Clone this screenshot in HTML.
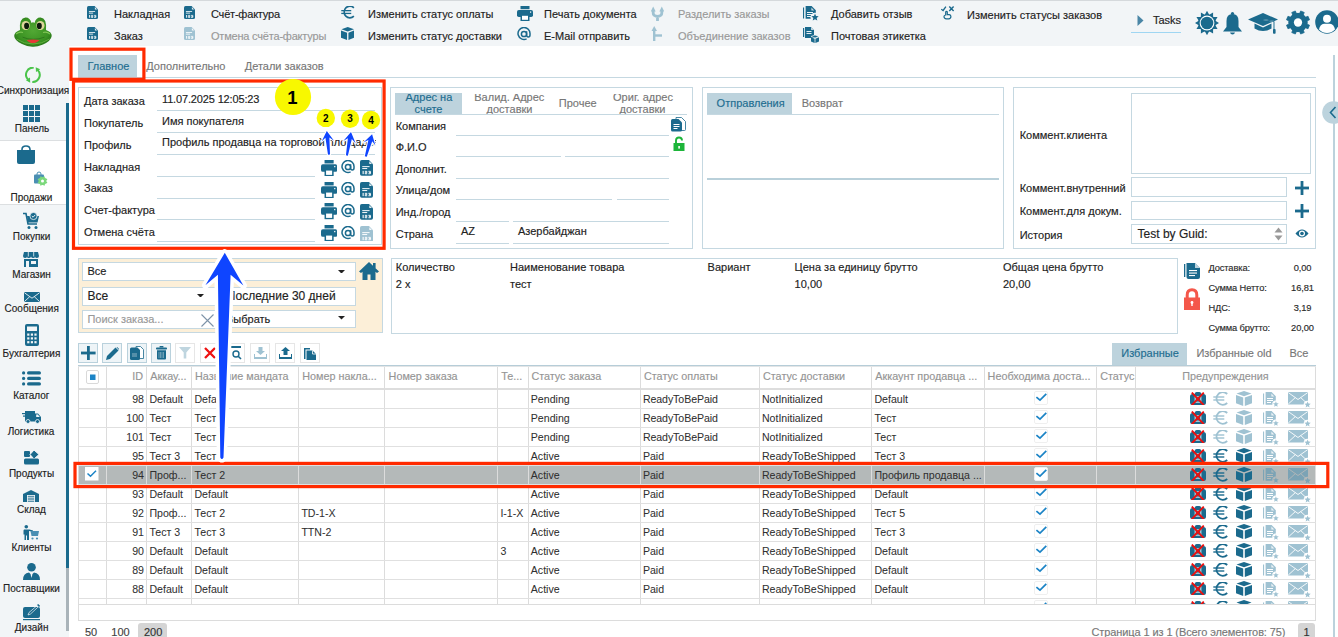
<!DOCTYPE html>
<html><head><meta charset="utf-8"><title>Order</title>
<style>
html,body{margin:0;padding:0;background:#fff;}
#root{position:relative;width:1338px;height:637px;overflow:hidden;background:#fff;font-family:"Liberation Sans", sans-serif;}
.a{position:absolute;display:block;}
.t{position:absolute;white-space:nowrap;line-height:1;font-family:"Liberation Sans", sans-serif;-webkit-text-stroke:0.15px currentColor;}
</style></head><body><div id="root">
<div class="a" style="left:0px;top:0px;width:1338px;height:46px;background:#f2f5f7"></div>
<div class="a" style="left:0px;top:0px;width:1338px;height:1px;background:#d5d9dc"></div>
<div class="a" style="left:0px;top:46px;width:69px;height:591px;background:#f2f5f7"></div>
<div class="a" style="left:0px;top:140px;width:66px;height:65px;background:#fff;border-top:1px solid #dcdfe1;border-bottom:1px solid #dcdfe1;box-sizing:border-box"></div>
<div class="a" style="left:66px;top:103px;width:3px;height:465px;background:#1b6a8d"></div>
<div class="a" style="left:66px;top:568px;width:3px;height:63px;background:#a9b3b9"></div>
<svg class="a" style="left:0;top:0" width="66" height="56" viewBox="0 0 66 56">
<defs><radialGradient id="fg" cx="0.5" cy="0.45" r="0.6"><stop offset="0" stop-color="#52a834"/><stop offset="0.7" stop-color="#3a9222"/><stop offset="1" stop-color="#256f18"/></radialGradient></defs>
<path d="M20 30Q19 18 25.5 17.5Q30 17.3 31.5 23Q33 21.5 34.5 23Q36 17.3 40.5 17.5Q47 18 46 30Q52 32 51.7 36Q51 41 43 44.5Q37 47 33 46.8Q28 47 22 44Q14.5 40.5 14.2 36Q14.2 32 20 30Z" fill="url(#fg)"/>
<path d="M16 34Q19 31.5 23 32.5M50 34Q47 31.5 43 32.5" fill="none" stroke="#8fd060" stroke-width="1.2" opacity=".8"/>
<path d="M16.5 39Q24 44 33 44Q42 44 49.5 39" fill="none" stroke="#7cc850" stroke-width="1" opacity=".6"/>
<ellipse cx="25.7" cy="25.5" rx="4.1" ry="4.6" fill="#ddd59a"/><ellipse cx="40.4" cy="25.5" rx="4.1" ry="4.6" fill="#ddd59a"/>
<ellipse cx="26.6" cy="25.9" rx="2.5" ry="3.1" fill="#0d1a0c"/><ellipse cx="39.3" cy="25.9" rx="2.5" ry="3.1" fill="#0d1a0c"/>
<path d="M22.6 37.2Q33 41.5 44.5 37.2" fill="none" stroke="#2a6e1a" stroke-width=".8"/>
<path d="M26.6 39.9Q33 38.9 39.5 39.9Q37 43 33 43Q29 43 26.6 39.9Z" fill="#e63a36"/>
</svg>
<svg class="a" style="left:87px;top:6px;" width="11" height="13" viewBox="0 0 11 13" preserveAspectRatio="none"><path d="M1.5 0H7.6L11 3.6V11.5Q11 13 9.5 13H1.5Q0 13 0 11.5V1.5Q0 0 1.5 0Z" fill="#1b6a8d"/><path d="M7.9 1.1V3.4H10.1Z" fill="#fff" opacity=".9"/><rect x="1.9" y="5.1" width="6.2" height=".8" fill="#fff"/><rect x="1.9" y="6.7" width="4.2" height=".8" fill="#fff"/><rect x="2.2" y="9" width=".9" height="2.7" fill="#fff"/><path d="M4.1 9.4H5.8V10.5H4.4V11.4H6.1M7.1 9.4H8.8V11.4H7.1M7.5 10.45H8.8" fill="none" stroke="#fff" stroke-width=".8"/></svg>
<div class="t" style="left:114.0px;top:9.39px;font-size:11px;color:#222;font-weight:normal;">Накладная</div>
<svg class="a" style="left:87px;top:27px;" width="11" height="13" viewBox="0 0 11 13" preserveAspectRatio="none"><path d="M1.5 0H7.6L11 3.6V11.5Q11 13 9.5 13H1.5Q0 13 0 11.5V1.5Q0 0 1.5 0Z" fill="#1b6a8d"/><path d="M7.9 1.1V3.4H10.1Z" fill="#fff" opacity=".9"/><rect x="1.9" y="5.1" width="6.2" height=".8" fill="#fff"/><rect x="1.9" y="6.7" width="4.2" height=".8" fill="#fff"/><rect x="2.2" y="9" width=".9" height="2.7" fill="#fff"/><path d="M4.1 9.4H5.8V10.5H4.4V11.4H6.1M7.1 9.4H8.8V11.4H7.1M7.5 10.45H8.8" fill="none" stroke="#fff" stroke-width=".8"/></svg>
<div class="t" style="left:114.0px;top:31.39px;font-size:11px;color:#222;font-weight:normal;">Заказ</div>
<svg class="a" style="left:184px;top:6px;" width="11" height="13" viewBox="0 0 11 13" preserveAspectRatio="none"><path d="M1.5 0H7.6L11 3.6V11.5Q11 13 9.5 13H1.5Q0 13 0 11.5V1.5Q0 0 1.5 0Z" fill="#1b6a8d"/><path d="M7.9 1.1V3.4H10.1Z" fill="#fff" opacity=".9"/><rect x="1.9" y="5.1" width="6.2" height=".8" fill="#fff"/><rect x="1.9" y="6.7" width="4.2" height=".8" fill="#fff"/><rect x="2.2" y="9" width=".9" height="2.7" fill="#fff"/><path d="M4.1 9.4H5.8V10.5H4.4V11.4H6.1M7.1 9.4H8.8V11.4H7.1M7.5 10.45H8.8" fill="none" stroke="#fff" stroke-width=".8"/></svg>
<div class="t" style="left:211.0px;top:9.39px;font-size:11px;color:#222;font-weight:normal;letter-spacing:-0.2px">Счёт-фактура</div>
<svg class="a" style="left:184px;top:27px;" width="11" height="13" viewBox="0 0 11 13" preserveAspectRatio="none"><path d="M1.5 0H7.6L11 3.6V11.5Q11 13 9.5 13H1.5Q0 13 0 11.5V1.5Q0 0 1.5 0Z" fill="#9fc2d2"/><path d="M7.9 1.1V3.4H10.1Z" fill="#fff" opacity=".9"/><rect x="1.9" y="5.1" width="6.2" height=".8" fill="#fff"/><rect x="1.9" y="6.7" width="4.2" height=".8" fill="#fff"/><rect x="2.2" y="9" width=".9" height="2.7" fill="#fff"/><path d="M4.1 9.4H5.8V10.5H4.4V11.4H6.1M7.1 9.4H8.8V11.4H7.1M7.5 10.45H8.8" fill="none" stroke="#fff" stroke-width=".8"/></svg>
<div class="t" style="left:211.0px;top:30.89px;font-size:11px;color:#999;font-weight:normal;letter-spacing:-0.2px">Отмена счёта-фактуры</div>
<svg class="a" style="left:340.5px;top:5.5px;" width="14.5" height="13" viewBox="0 0 16 14" preserveAspectRatio="none"><path d="M14.2 2A6.3 6.3 0 1 0 14.2 11" fill="none" stroke="#1b6a8d" stroke-width="1.8"/><rect x="0.3" y="4.3" width="11" height="1.4" fill="#1b6a8d"/><rect x="0.3" y="7.3" width="11" height="1.4" fill="#1b6a8d"/></svg>
<div class="t" style="left:368.0px;top:9.39px;font-size:11px;color:#222;font-weight:normal;">Изменить статус оплаты</div>
<svg class="a" style="left:340.8px;top:27px;" width="13.5" height="13" viewBox="0 0 16 15" preserveAspectRatio="none"><path d="M8 0L15.5 2.6L8 5.2L0.5 2.6Z" fill="#1b6a8d"/><path d="M0 3.9L7.2 6.6V15L0 12.3Z" fill="#1b6a8d"/><path d="M16 3.9L8.8 6.6V15L16 12.3Z" fill="#1b6a8d"/></svg>
<div class="t" style="left:368.0px;top:30.89px;font-size:11px;color:#222;font-weight:normal;">Изменить статус доставки</div>
<svg class="a" style="left:517px;top:6px;" width="16" height="15" viewBox="0 0 16 15" preserveAspectRatio="none"><rect x="3.5" y="0" width="9" height="3.2" fill="#1b6a8d"/><rect x="0" y="4" width="16" height="7" rx="1.8" fill="#1b6a8d"/><rect x="3.5" y="8.5" width="9" height="6.5" fill="#1b6a8d"/><rect x="5" y="9.8" width="6" height="4" fill="#fff"/><rect x="13" y="5.5" width="1.2" height="1.2" fill="#fff"/></svg>
<div class="t" style="left:544.0px;top:9.39px;font-size:11px;color:#222;font-weight:normal;">Печать документа</div>
<svg class="a" style="left:517px;top:26.5px;" width="14" height="14" viewBox="0 0 14 14" preserveAspectRatio="none"><path d="M9.6 11.9A6 6 0 1 1 13 7V8Q13 10 11.3 10Q9.6 10 9.6 8V4.3" fill="none" stroke="#1b6a8d" stroke-width="1.5"/><circle cx="7" cy="7" r="2.6" fill="none" stroke="#1b6a8d" stroke-width="1.5"/></svg>
<div class="t" style="left:544.0px;top:30.89px;font-size:11px;color:#222;font-weight:normal;">E-Mail отправить</div>
<svg class="a" style="left:651px;top:6px;" width="13" height="15" viewBox="0 0 13 15" preserveAspectRatio="none"><path d="M2.2 4.5V7Q2.2 10 6.5 10.5V15M10.8 4.5V7Q10.8 10 6.5 10.5" fill="none" stroke="#9fc2d2" stroke-width="2.8"/><path d="M-0.3 5.5L2.2 0.5L4.7 5.5Z" fill="#9fc2d2"/><path d="M8.3 5.5L10.8 0.5L13.3 5.5Z" fill="#9fc2d2"/></svg>
<div class="t" style="left:678.0px;top:9.39px;font-size:11px;color:#999;font-weight:normal;">Разделить заказы</div>
<svg class="a" style="left:651px;top:26px;" width="11" height="15" viewBox="0 0 11 15" preserveAspectRatio="none"><path d="M3.2 4V15" stroke="#9fc2d2" stroke-width="2.4"/><path d="M3 9.5H11" stroke="#9fc2d2" stroke-width="2.4"/><path d="M0.5 5L3.2 0L6 5Z" fill="#9fc2d2"/></svg>
<div class="t" style="left:678.0px;top:30.89px;font-size:11px;color:#999;font-weight:normal;">Объединение заказов</div>
<svg class="a" style="left:803px;top:6px;" width="16" height="15" viewBox="0 0 16 15" preserveAspectRatio="none"><rect x="0" y="1.5" width="1.1" height="11" fill="#1b6a8d"/><path d="M2.6 0H8.6L12.8 4.2V10.5Q12.8 12.8 10.5 12.8H2.6Z" fill="#1b6a8d"/><path d="M8.4 1.6V4.4H11.2Z" fill="#f2f5f7" opacity=".8"/><rect x="4" y="6" width="6" height="1" fill="#f2f5f7"/><rect x="4" y="8" width="6" height="1" fill="#f2f5f7"/><rect x="4" y="10" width="4" height="1" fill="#f2f5f7"/><circle cx="12.00" cy="11.20" r="4.50" fill="#f2f5f7"/><polygon points="12.00,7.50 13.03,9.98 15.71,10.19 13.67,11.94 14.29,14.56 12.00,13.16 9.71,14.56 10.33,11.94 8.29,10.19 10.97,9.98" fill="#1b6a8d"/></svg>
<div class="t" style="left:831.0px;top:9.39px;font-size:11px;color:#222;font-weight:normal;">Добавить отзыв</div>
<svg class="a" style="left:803px;top:26.5px;" width="16" height="16" viewBox="0 0 16 16" preserveAspectRatio="none"><rect x="0" y="1" width="1.2" height="9" fill="#1b6a8d"/><path d="M2 0H8L11 3V11H2Z" fill="#1b6a8d"/><path d="M8 0V3H11Z" fill="#fff" opacity=".7"/><rect x="3.5" y="4" width="5" height=".9" fill="#fff"/><rect x="3.5" y="6" width="5" height=".9" fill="#fff"/><path d="M12 8L16 9.5L12 11L8 9.5Z" fill="#1b6a8d" stroke="#fff" stroke-width=".6"/><path d="M8 10.3L11.6 11.7V16L8 14.6Z" fill="#1b6a8d"/><path d="M16 10.3L12.4 11.7V16L16 14.6Z" fill="#1b6a8d"/></svg>
<div class="t" style="left:831.0px;top:30.89px;font-size:11px;color:#222;font-weight:normal;">Почтовая этикетка</div>
<svg class="a" style="left:941px;top:6px;" width="14" height="13.5" viewBox="0 0 14 13.5" preserveAspectRatio="none"><path d="M0.2 3.2L2.1 4.5L4.9 0.6" fill="none" stroke="#1b6a8d" stroke-width="1.3"/><path d="M8.3 0.5L12.6 5.1M12.6 0.5L8.3 5.1" stroke="#1b6a8d" stroke-width="1.4"/><path d="M4.7 9V6.2Q4.7 5.4 5.5 5.4Q6.3 5.4 6.3 6.2V8.6H8.3Q9.9 8.9 9.9 10.6Q9.9 12.8 7.7 12.8H5.4Q3 12.8 3 10.6Q3 9.3 4.7 9Z" fill="none" stroke="#1b6a8d" stroke-width="1.2"/></svg>
<div class="t" style="left:967.0px;top:10.39px;font-size:11px;color:#222;font-weight:normal;">Изменить статусы заказов</div>
<svg class="a" style="left:1137px;top:15px;" width="7" height="11" viewBox="0 0 7 11" preserveAspectRatio="none"><path d="M0.5 0L6.5 5.5L0.5 11Z" fill="#4a86a6"/></svg>
<div class="t" style="left:1153.0px;top:15.39px;font-size:11px;color:#222;font-weight:normal;">Tasks</div>
<div class="a" style="left:1131px;top:32px;width:50px;height:1px;background:#9fd6f2"></div>
<svg class="a" style="left:1194.5px;top:10.5px;" width="24" height="24" viewBox="0 0 24 24" preserveAspectRatio="none"><polygon points="12.00,-0.20 14.23,3.69 18.10,1.43 18.08,5.92 22.57,5.90 20.31,9.77 24.20,12.00 20.31,14.23 22.57,18.10 18.08,18.08 18.10,22.57 14.23,20.31 12.00,24.20 9.77,20.31 5.90,22.57 5.92,18.08 1.43,18.10 3.69,14.23 -0.20,12.00 3.69,9.77 1.43,5.90 5.92,5.92 5.90,1.43 9.77,3.69" fill="#1b6a8d"/><circle cx="12" cy="12" r="8.8" fill="#1b6a8d"/><circle cx="12" cy="12" r="7.4" fill="#fff"/><circle cx="12" cy="12" r="6.3" fill="#1b6a8d"/></svg>
<svg class="a" style="left:1222.5px;top:11.5px;" width="19" height="23" viewBox="0 0 19 23" preserveAspectRatio="none"><circle cx="9.5" cy="1.6" r="1.6" fill="#1b6a8d"/><path d="M9.5 2Q15.5 2 15.5 9V15L19 19.5H0L3.5 15V9Q3.5 2 9.5 2Z" fill="#1b6a8d"/><path d="M7 20.5H12Q11.5 22.5 9.5 22.5Q7.5 22.5 7 20.5Z" fill="#1b6a8d"/></svg>
<svg class="a" style="left:1248px;top:12.5px;" width="30" height="21" viewBox="0 0 30 21" preserveAspectRatio="none"><path d="M15 0L30 6.5L15 13L0 6.5Z" fill="#1b6a8d"/><path d="M6.5 10.5V15.5Q15 20.5 23.5 15.5V10.5L15 14.5Z" fill="#1b6a8d"/><path d="M15 6.5L26.5 8.5V17" fill="none" stroke="#fff" stroke-width="0.9"/><path d="M15 6.5L26 8.3V17" fill="none" stroke="#1b6a8d" stroke-width="1"/><rect x="25" y="16" width="2.6" height="4.8" rx="0.8" fill="#1b6a8d"/></svg>
<svg class="a" style="left:1286px;top:9.5px;" width="24" height="25" viewBox="-0.5 -0.5 25 26" preserveAspectRatio="none"><path d="M21.50,12.50 L21.36,14.13 L23.98,15.28 L22.44,19.01 L19.77,17.96 L18.72,19.22 L17.46,20.27 L18.51,22.94 L14.78,24.48 L13.63,21.86 L12.00,22.00 L10.37,21.86 L9.22,24.48 L5.49,22.94 L6.54,20.27 L5.28,19.22 L4.23,17.96 L1.56,19.01 L0.02,15.28 L2.64,14.13 L2.50,12.50 L2.64,10.87 L0.02,9.72 L1.56,5.99 L4.23,7.04 L5.28,5.78 L6.54,4.73 L5.49,2.06 L9.22,0.52 L10.37,3.14 L12.00,3.00 L13.63,3.14 L14.78,0.52 L18.51,2.06 L17.46,4.73 L18.72,5.78 L19.77,7.04 L22.44,5.99 L23.98,9.72 L21.36,10.87Z" fill="#1b6a8d" stroke="#1b6a8d" stroke-width="0.8" stroke-linejoin="round"/><circle cx="12" cy="12.5" r="9.8" fill="#1b6a8d"/><circle cx="12" cy="12.5" r="4.3" fill="#fff"/></svg>
<svg class="a" style="left:1315px;top:10px;" width="24" height="24" viewBox="0 0 24 24" preserveAspectRatio="none"><circle cx="12" cy="12" r="11.8" fill="#1b6a8d"/><circle cx="12" cy="8.8" r="4" fill="#fff"/><path d="M4 19.5Q5 14.5 9 13.8H15Q19 14.5 20 19.5Q16.5 23 12 23Q7.5 23 4 19.5Z" fill="#fff"/></svg>
<svg class="a" style="left:25px;top:67px;" width="16" height="16" viewBox="0 0 16 16" preserveAspectRatio="none"><path d="M8.7 0.7A7 7 0 0 0 3.4 12.9" fill="none" stroke="#4bc44b" stroke-width="2"/><path d="M7.3 14.9A7 7 0 0 0 12.6 2.9" fill="none" stroke="#4bc44b" stroke-width="2"/><path d="M0.9 13.3L5 10.6L5.2 15.8Z" fill="#4bc44b"/><path d="M10.7 0.2L11 5L15.2 2.2Z" fill="#4bc44b"/></svg>
<div class="t" style="left:-17.0px;width:100px;text-align:center;top:86.23px;font-size:10px;color:#222;font-weight:normal;">Синхронизация</div>
<svg class="a" style="left:23px;top:105px;" width="17" height="17" viewBox="0 0 17 17" preserveAspectRatio="none"><rect x="0" y="0" width="5" height="5" fill="#1b6a8d"/><rect x="0" y="6" width="5" height="5" fill="#1b6a8d"/><rect x="0" y="12" width="5" height="5" fill="#1b6a8d"/><rect x="6" y="0" width="5" height="5" fill="#1b6a8d"/><rect x="6" y="6" width="5" height="5" fill="#1b6a8d"/><rect x="6" y="12" width="5" height="5" fill="#1b6a8d"/><rect x="12" y="0" width="5" height="5" fill="#1b6a8d"/><rect x="12" y="6" width="5" height="5" fill="#1b6a8d"/><rect x="12" y="12" width="5" height="5" fill="#1b6a8d"/></svg>
<div class="t" style="left:-18.0px;width:100px;text-align:center;top:123.83px;font-size:10px;color:#222;font-weight:normal;">Панель</div>
<svg class="a" style="left:17px;top:145px;" width="18" height="19" viewBox="0 0 18 19" preserveAspectRatio="none"><path d="M5 6V4.5Q5 1 9 1Q13 1 13 4.5V6" fill="none" stroke="#1b6a8d" stroke-width="1.6"/><path d="M0 5H18V17Q18 19 16 19H2Q0 19 0 17Z" fill="#1b6a8d"/></svg>
<svg class="a" style="left:34px;top:170.5px;" width="14" height="15" viewBox="0 0 14 15" preserveAspectRatio="none"><path d="M3 4V3Q3 1 5 1Q7 1 7 3V4" fill="none" stroke="#4a8fb3" stroke-width="1"/><rect x="0" y="3.5" width="10" height="9" rx="1" fill="#4a8fb3"/><path d="M12.30,10.00 L12.21,10.81 L13.32,11.34 L12.85,12.46 L11.70,12.05 L11.19,12.69 L10.55,13.20 L10.96,14.35 L9.84,14.82 L9.31,13.71 L8.50,13.80 L7.69,13.71 L7.16,14.82 L6.04,14.35 L6.45,13.20 L5.81,12.69 L5.30,12.05 L4.15,12.46 L3.68,11.34 L4.79,10.81 L4.70,10.00 L4.79,9.19 L3.68,8.66 L4.15,7.54 L5.30,7.95 L5.81,7.31 L6.45,6.80 L6.04,5.65 L7.16,5.18 L7.69,6.29 L8.50,6.20 L9.31,6.29 L9.84,5.18 L10.96,5.65 L10.55,6.80 L11.19,7.31 L11.70,7.95 L12.85,7.54 L13.32,8.66 L12.21,9.19Z" fill="#7bd87b"/><circle cx="8.5" cy="10" r="3.9" fill="#7bd87b"/><circle cx="8.5" cy="10" r="1.5" fill="#fff"/></svg>
<div class="t" style="left:-18.6px;width:100px;text-align:center;top:193.23px;font-size:10px;color:#222;font-weight:normal;">Продажи</div>
<svg class="a" style="left:23px;top:212px;" width="17" height="17" viewBox="0 0 17 17" preserveAspectRatio="none"><path d="M0 1.5H3L5 12H14" fill="none" stroke="#1b6a8d" stroke-width="1.6"/><path d="M4 4H16L14.5 10.5H5Z" fill="#1b6a8d"/><circle cx="10.5" cy="4" r="3.6" fill="#1b6a8d" stroke="#f2f5f7" stroke-width="0.8"/><path d="M8.8 4L10.1 5.2L12.3 2.8" fill="none" stroke="#fff" stroke-width="0.9"/><circle cx="6" cy="15.5" r="1.5" fill="#1b6a8d"/><circle cx="13" cy="15.5" r="1.5" fill="#1b6a8d"/></svg>
<div class="t" style="left:-18.5px;width:100px;text-align:center;top:231.83px;font-size:10px;color:#222;font-weight:normal;">Покупки</div>
<svg class="a" style="left:23px;top:251.5px;" width="16" height="15" viewBox="0 0 16 15" preserveAspectRatio="none"><path d="M1 0H15L16 4Q16 6 14 6Q12 6 12 4.5Q12 6 10.5 6Q8 6 8 4.5Q8 6 5.5 6Q4 6 4 4.5Q4 6 2 6Q0 6 0 4Z" fill="#1b6a8d"/><rect x="1" y="7" width="14" height="8" fill="#1b6a8d"/><rect x="3" y="9" width="3" height="6" fill="#f2f5f7"/><rect x="8" y="9" width="5" height="3" fill="#f2f5f7"/><path d="M5.3 0V4.5M10.7 0V4.5" stroke="#f2f5f7" stroke-width="0.8"/></svg>
<div class="t" style="left:-18.5px;width:100px;text-align:center;top:270.24px;font-size:10px;color:#222;font-weight:normal;">Магазин</div>
<svg class="a" style="left:24px;top:292px;" width="16" height="10" viewBox="0 0 16 10" preserveAspectRatio="none"><rect x="0" y="0" width="16" height="10" rx="1" fill="#1b6a8d"/><path d="M0.5 0.8L8 6.2L15.5 0.8M0.5 9.5L5.8 4.6M15.5 9.5L10.2 4.6" fill="none" stroke="#f2f5f7" stroke-width="0.9"/></svg>
<div class="t" style="left:-18.3px;width:100px;text-align:center;top:303.94px;font-size:10px;color:#222;font-weight:normal;">Сообщения</div>
<svg class="a" style="left:24.5px;top:324px;" width="14" height="22" viewBox="0 0 14 22" preserveAspectRatio="none"><rect x="0" y="0" width="14" height="22" rx="2" fill="#1b6a8d"/><rect x="2" y="2.5" width="10" height="4.5" fill="#f2f5f7"/><rect x="2.2" y="9.5" width="2.2" height="2.2" fill="#f2f5f7"/><rect x="5.8" y="9.5" width="2.2" height="2.2" fill="#f2f5f7"/><rect x="9.4" y="9.5" width="2.2" height="2.2" fill="#f2f5f7"/><rect x="2.2" y="13.3" width="2.2" height="2.2" fill="#f2f5f7"/><rect x="5.8" y="13.3" width="2.2" height="2.2" fill="#f2f5f7"/><rect x="9.4" y="13.3" width="2.2" height="2.2" fill="#f2f5f7"/><rect x="2.2" y="17.1" width="2.2" height="2.2" fill="#f2f5f7"/><rect x="5.8" y="17.1" width="2.2" height="2.2" fill="#f2f5f7"/><rect x="9.4" y="17.1" width="2.2" height="2.2" fill="#f2f5f7"/></svg>
<div class="t" style="left:-18.5px;width:100px;text-align:center;top:348.84px;font-size:10px;color:#222;font-weight:normal;">Бухгалтерия</div>
<svg class="a" style="left:22px;top:370.5px;" width="19" height="15" viewBox="0 0 19 15" preserveAspectRatio="none"><circle cx="1.6" cy="1.9" r="1.6" fill="#1b6a8d"/><rect x="5" y="0.2" width="14" height="3.4" rx="1.7" fill="#1b6a8d"/><circle cx="1.6" cy="7.4" r="1.6" fill="#1b6a8d"/><rect x="5" y="5.7" width="14" height="3.4" rx="1.7" fill="#1b6a8d"/><circle cx="1.6" cy="12.9" r="1.6" fill="#1b6a8d"/><rect x="5" y="11.2" width="14" height="3.4" rx="1.7" fill="#1b6a8d"/></svg>
<div class="t" style="left:-18.7px;width:100px;text-align:center;top:390.54px;font-size:10px;color:#222;font-weight:normal;">Каталог</div>
<svg class="a" style="left:22px;top:411px;" width="19" height="13" viewBox="0 0 19 13" preserveAspectRatio="none"><rect x="3" y="0" width="10" height="9" fill="#1b6a8d"/><path d="M13 2.5H16L19 6V9.5H13Z" fill="#1b6a8d"/><rect x="0" y="2" width="5" height="1.2" fill="#1b6a8d"/><rect x="1" y="4.5" width="4" height="1.2" fill="#1b6a8d"/><rect x="3" y="9" width="16" height="1.5" fill="#1b6a8d"/><circle cx="6" cy="10.5" r="2" fill="#1b6a8d" stroke="#f2f5f7" stroke-width="0.8"/><circle cx="15.5" cy="10.5" r="2" fill="#1b6a8d" stroke="#f2f5f7" stroke-width="0.8"/><path d="M14.2 3.5H15.8L17.8 6H14.2Z" fill="#f2f5f7"/></svg>
<div class="t" style="left:-19.0px;width:100px;text-align:center;top:426.63px;font-size:10px;color:#222;font-weight:normal;">Логистика</div>
<svg class="a" style="left:24px;top:449.5px;" width="15" height="15" viewBox="0 0 15 15" preserveAspectRatio="none"><rect x="0" y="1" width="6" height="6" rx="1" fill="#1b6a8d"/><path d="M10 0L15 4.5L10 9L6 4.5Z" fill="#1b6a8d" stroke="#f2f5f7" stroke-width="1"/><rect x="0" y="8.5" width="15" height="6" rx="1.5" fill="#1b6a8d"/></svg>
<div class="t" style="left:-18.5px;width:100px;text-align:center;top:468.63px;font-size:10px;color:#222;font-weight:normal;">Продукты</div>
<svg class="a" style="left:23px;top:489.6px;" width="16" height="12" viewBox="0 0 16 12" preserveAspectRatio="none"><path d="M0 4L8 0L16 4V12H0Z" fill="#1b6a8d"/><rect x="4" y="5" width="8" height="7" fill="#f2f5f7"/><rect x="4.8" y="5.8" width="6.4" height="1.6" fill="#1b6a8d" opacity=".7"/><rect x="4.8" y="8.2" width="6.4" height="1.6" fill="#1b6a8d" opacity=".7"/><rect x="4.8" y="10.6" width="6.4" height="1.4" fill="#1b6a8d" opacity=".7"/></svg>
<div class="t" style="left:-18.5px;width:100px;text-align:center;top:504.84px;font-size:10px;color:#222;font-weight:normal;">Склад</div>
<svg class="a" style="left:23px;top:525px;" width="16" height="15" viewBox="0 0 16 15" preserveAspectRatio="none"><circle cx="3.3" cy="1.8" r="1.8" fill="#1b6a8d"/><path d="M1 4.5H6.5L10 5.5V6.5L6 6V15H4V10.5H3V15H1.5V9.5H0.5V5.5Z" fill="#1b6a8d"/><path d="M7.5 6H16L15 11H8.5Z" fill="#4a8fb3"/><circle cx="9.5" cy="13.5" r="1.1" fill="#4a8fb3"/><circle cx="14" cy="13.5" r="1.1" fill="#4a8fb3"/></svg>
<div class="t" style="left:-18.5px;width:100px;text-align:center;top:543.03px;font-size:10px;color:#222;font-weight:normal;">Клиенты</div>
<svg class="a" style="left:23px;top:563px;" width="17" height="17" viewBox="0 0 17 17" preserveAspectRatio="none"><circle cx="8.5" cy="4.3" r="4.3" fill="#1b6a8d"/><path d="M0 17Q0 10 6 9.5L8.5 12L11 9.5Q17 10 17 17Z" fill="#1b6a8d"/><path d="M8.5 10.5L7.6 11.5L8.5 15L9.4 11.5Z" fill="#f2f5f7"/></svg>
<div class="t" style="left:-18.5px;width:100px;text-align:center;top:583.84px;font-size:10px;color:#222;font-weight:normal;">Поставщики</div>
<svg class="a" style="left:23px;top:604px;" width="17" height="17" viewBox="0 0 17 17" preserveAspectRatio="none"><rect x="0" y="3" width="17" height="11" rx="2" fill="#1b6a8d"/><rect x="0" y="15" width="17" height="1.2" fill="#1b6a8d"/><path d="M5 11L6 8.5L15 0.8L16.2 2L7.5 10Z" fill="none" stroke="#f2f5f7" stroke-width="0.7"/><path d="M14.6 0.5L16.5 2.4" stroke="#1b6a8d" stroke-width="1.5"/></svg>
<div class="t" style="left:-18.4px;width:100px;text-align:center;top:622.94px;font-size:10px;color:#222;font-weight:normal;">Дизайн</div>
<div class="a" style="left:78px;top:55px;width:59px;height:23px;background:#bdd3dd"></div>
<div class="t" style="left:87.4px;top:61.39px;font-size:11px;color:#1d6d90;font-weight:normal;">Главное</div>
<div class="t" style="left:146.3px;top:61.39px;font-size:11px;color:#777;font-weight:normal;">Дополнительно</div>
<div class="t" style="left:244.7px;top:61.39px;font-size:11px;color:#777;font-weight:normal;">Детали заказов</div>
<div class="a" style="left:78px;top:77px;width:1238px;height:1px;background:#c5d8e1"></div>
<div class="a" style="left:1333px;top:55px;width:2px;height:582px;background:#bcd2dc"></div>
<svg class="a" style="left:1322px;top:101px" width="16" height="23" viewBox="0 0 16 23"><circle cx="11.5" cy="11.5" r="11.3" fill="#bcd3dd"/><path d="M13.5 6L8.5 11.5L13.5 17" fill="none" stroke="#1b6a8d" stroke-width="1.6"/></svg>
<div class="a" style="left:78px;top:87px;width:304px;height:158px;border:1px solid #c5d8e1;box-sizing:border-box"></div>
<div class="t" style="left:84.0px;top:95.99px;font-size:11px;color:#222;font-weight:normal;">Дата заказа</div>
<div class="a" style="left:157px;top:110px;width:218px;height:1px;background:#c5d8e1"></div>
<div class="t" style="left:84.0px;top:117.84px;font-size:11px;color:#222;font-weight:normal;">Покупатель</div>
<div class="a" style="left:157px;top:132px;width:218px;height:1px;background:#c5d8e1"></div>
<div class="t" style="left:84.0px;top:139.69px;font-size:11px;color:#222;font-weight:normal;">Профиль</div>
<div class="a" style="left:157px;top:154px;width:218px;height:1px;background:#c5d8e1"></div>
<div class="t" style="left:84.0px;top:161.54px;font-size:11px;color:#222;font-weight:normal;">Накладная</div>
<div class="a" style="left:157px;top:176px;width:158px;height:1px;background:#c5d8e1"></div>
<div class="t" style="left:84.0px;top:183.39px;font-size:11px;color:#222;font-weight:normal;">Заказ</div>
<div class="a" style="left:157px;top:198px;width:158px;height:1px;background:#c5d8e1"></div>
<div class="t" style="left:84.0px;top:205.24px;font-size:11px;color:#222;font-weight:normal;">Счет-фактура</div>
<div class="a" style="left:157px;top:219px;width:158px;height:1px;background:#c5d8e1"></div>
<div class="t" style="left:84.0px;top:227.09px;font-size:11px;color:#222;font-weight:normal;">Отмена счёта</div>
<div class="a" style="left:157px;top:241px;width:158px;height:1px;background:#c5d8e1"></div>
<div class="t" style="left:162.0px;top:94.19px;font-size:11px;color:#222;font-weight:normal;letter-spacing:-0.15px">11.07.2025 12:05:23</div>
<div class="t" style="left:162.0px;top:116.04px;font-size:11px;color:#222;font-weight:normal;">Имя покупателя</div>
<div class="a" style="left:162px;top:137.3px;width:214px;height:16px;overflow:hidden"><div class="t" style="left:0;top:-0.11px;font-size:11px;color:#222">Профиль продавца на торговой площадке</div></div>
<svg class="a" style="left:321.2px;top:159.65px;" width="16.2" height="16.2" viewBox="0 0 16 15" preserveAspectRatio="none"><rect x="3.5" y="0" width="9" height="3.2" fill="#1b6a8d"/><rect x="0" y="4" width="16" height="7" rx="1.8" fill="#1b6a8d"/><rect x="3.5" y="8.5" width="9" height="6.5" fill="#1b6a8d"/><rect x="5" y="9.8" width="6" height="4" fill="#fff"/><rect x="13" y="5.5" width="1.2" height="1.2" fill="#fff"/></svg>
<svg class="a" style="left:341px;top:160.15px;" width="14" height="14" viewBox="0 0 14 14" preserveAspectRatio="none"><path d="M9.6 11.9A6 6 0 1 1 13 7V8Q13 10 11.3 10Q9.6 10 9.6 8V4.3" fill="none" stroke="#1b6a8d" stroke-width="1.5"/><circle cx="7" cy="7" r="2.6" fill="none" stroke="#1b6a8d" stroke-width="1.5"/></svg>
<svg class="a" style="left:360px;top:160.15px;" width="13" height="15.7" viewBox="0 0 11 13" preserveAspectRatio="none"><path d="M1.5 0H7.6L11 3.6V11.5Q11 13 9.5 13H1.5Q0 13 0 11.5V1.5Q0 0 1.5 0Z" fill="#1b6a8d"/><path d="M7.9 1.1V3.4H10.1Z" fill="#fff" opacity=".9"/><rect x="1.9" y="5.1" width="6.2" height=".8" fill="#fff"/><rect x="1.9" y="6.7" width="4.2" height=".8" fill="#fff"/><rect x="2.2" y="9" width=".9" height="2.7" fill="#fff"/><path d="M4.1 9.4H5.8V10.5H4.4V11.4H6.1M7.1 9.4H8.8V11.4H7.1M7.5 10.45H8.8" fill="none" stroke="#fff" stroke-width=".8"/></svg>
<svg class="a" style="left:321.2px;top:181.5px;" width="16.2" height="16.2" viewBox="0 0 16 15" preserveAspectRatio="none"><rect x="3.5" y="0" width="9" height="3.2" fill="#1b6a8d"/><rect x="0" y="4" width="16" height="7" rx="1.8" fill="#1b6a8d"/><rect x="3.5" y="8.5" width="9" height="6.5" fill="#1b6a8d"/><rect x="5" y="9.8" width="6" height="4" fill="#fff"/><rect x="13" y="5.5" width="1.2" height="1.2" fill="#fff"/></svg>
<svg class="a" style="left:341px;top:182.0px;" width="14" height="14" viewBox="0 0 14 14" preserveAspectRatio="none"><path d="M9.6 11.9A6 6 0 1 1 13 7V8Q13 10 11.3 10Q9.6 10 9.6 8V4.3" fill="none" stroke="#1b6a8d" stroke-width="1.5"/><circle cx="7" cy="7" r="2.6" fill="none" stroke="#1b6a8d" stroke-width="1.5"/></svg>
<svg class="a" style="left:360px;top:182.0px;" width="13" height="15.7" viewBox="0 0 11 13" preserveAspectRatio="none"><path d="M1.5 0H7.6L11 3.6V11.5Q11 13 9.5 13H1.5Q0 13 0 11.5V1.5Q0 0 1.5 0Z" fill="#1b6a8d"/><path d="M7.9 1.1V3.4H10.1Z" fill="#fff" opacity=".9"/><rect x="1.9" y="5.1" width="6.2" height=".8" fill="#fff"/><rect x="1.9" y="6.7" width="4.2" height=".8" fill="#fff"/><rect x="2.2" y="9" width=".9" height="2.7" fill="#fff"/><path d="M4.1 9.4H5.8V10.5H4.4V11.4H6.1M7.1 9.4H8.8V11.4H7.1M7.5 10.45H8.8" fill="none" stroke="#fff" stroke-width=".8"/></svg>
<svg class="a" style="left:321.2px;top:203.35px;" width="16.2" height="16.2" viewBox="0 0 16 15" preserveAspectRatio="none"><rect x="3.5" y="0" width="9" height="3.2" fill="#1b6a8d"/><rect x="0" y="4" width="16" height="7" rx="1.8" fill="#1b6a8d"/><rect x="3.5" y="8.5" width="9" height="6.5" fill="#1b6a8d"/><rect x="5" y="9.8" width="6" height="4" fill="#fff"/><rect x="13" y="5.5" width="1.2" height="1.2" fill="#fff"/></svg>
<svg class="a" style="left:341px;top:203.85px;" width="14" height="14" viewBox="0 0 14 14" preserveAspectRatio="none"><path d="M9.6 11.9A6 6 0 1 1 13 7V8Q13 10 11.3 10Q9.6 10 9.6 8V4.3" fill="none" stroke="#1b6a8d" stroke-width="1.5"/><circle cx="7" cy="7" r="2.6" fill="none" stroke="#1b6a8d" stroke-width="1.5"/></svg>
<svg class="a" style="left:360px;top:203.85px;" width="13" height="15.7" viewBox="0 0 11 13" preserveAspectRatio="none"><path d="M1.5 0H7.6L11 3.6V11.5Q11 13 9.5 13H1.5Q0 13 0 11.5V1.5Q0 0 1.5 0Z" fill="#1b6a8d"/><path d="M7.9 1.1V3.4H10.1Z" fill="#fff" opacity=".9"/><rect x="1.9" y="5.1" width="6.2" height=".8" fill="#fff"/><rect x="1.9" y="6.7" width="4.2" height=".8" fill="#fff"/><rect x="2.2" y="9" width=".9" height="2.7" fill="#fff"/><path d="M4.1 9.4H5.8V10.5H4.4V11.4H6.1M7.1 9.4H8.8V11.4H7.1M7.5 10.45H8.8" fill="none" stroke="#fff" stroke-width=".8"/></svg>
<svg class="a" style="left:321.2px;top:225.20000000000002px;" width="16.2" height="16.2" viewBox="0 0 16 15" preserveAspectRatio="none"><rect x="3.5" y="0" width="9" height="3.2" fill="#1b6a8d"/><rect x="0" y="4" width="16" height="7" rx="1.8" fill="#1b6a8d"/><rect x="3.5" y="8.5" width="9" height="6.5" fill="#1b6a8d"/><rect x="5" y="9.8" width="6" height="4" fill="#fff"/><rect x="13" y="5.5" width="1.2" height="1.2" fill="#fff"/></svg>
<svg class="a" style="left:341px;top:225.70000000000002px;" width="14" height="14" viewBox="0 0 14 14" preserveAspectRatio="none"><path d="M9.6 11.9A6 6 0 1 1 13 7V8Q13 10 11.3 10Q9.6 10 9.6 8V4.3" fill="none" stroke="#1b6a8d" stroke-width="1.5"/><circle cx="7" cy="7" r="2.6" fill="none" stroke="#1b6a8d" stroke-width="1.5"/></svg>
<svg class="a" style="left:360px;top:225.70000000000002px;" width="13" height="15.7" viewBox="0 0 11 13" preserveAspectRatio="none"><path d="M1.5 0H7.6L11 3.6V11.5Q11 13 9.5 13H1.5Q0 13 0 11.5V1.5Q0 0 1.5 0Z" fill="#9fc2d2"/><path d="M7.9 1.1V3.4H10.1Z" fill="#fff" opacity=".9"/><rect x="1.9" y="5.1" width="6.2" height=".8" fill="#fff"/><rect x="1.9" y="6.7" width="4.2" height=".8" fill="#fff"/><rect x="2.2" y="9" width=".9" height="2.7" fill="#fff"/><path d="M4.1 9.4H5.8V10.5H4.4V11.4H6.1M7.1 9.4H8.8V11.4H7.1M7.5 10.45H8.8" fill="none" stroke="#fff" stroke-width=".8"/></svg>
<div class="a" style="left:390px;top:87px;width:303px;height:162px;border:1px solid #c5d8e1;box-sizing:border-box"></div>
<div class="a" style="left:395px;top:93px;width:67px;height:21px;background:#bdd3dd"></div>
<div class="a" style="left:395px;top:93.5px;width:292px;height:21px;overflow:hidden">
<div class="t" style="left:-16.1px;width:100px;text-align:center;top:-1.91px;font-size:11px;color:#1d6d90">Адрес на</div>
<div class="t" style="left:-16.5px;width:100px;text-align:center;top:10.69px;font-size:11px;color:#1d6d90">счете</div>
<div class="t" style="left:64.3px;width:100px;text-align:center;top:-1.91px;font-size:11px;color:#777">Валид. Адрес</div>
<div class="t" style="left:64.5px;width:100px;text-align:center;top:10.69px;font-size:11px;color:#777">доставки</div>
<div class="t" style="left:132.7px;width:100px;text-align:center;top:4.49px;font-size:11px;color:#777">Прочее</div>
<div class="t" style="left:198.0px;width:100px;text-align:center;top:-1.91px;font-size:11px;color:#777">Ориг. адрес</div>
<div class="t" style="left:197.5px;width:100px;text-align:center;top:10.69px;font-size:11px;color:#777">доставки</div>
</div>
<div class="a" style="left:395px;top:114px;width:292px;height:1px;background:#c5d8e1"></div>
<div class="t" style="left:395.7px;top:120.69px;font-size:11px;color:#222;font-weight:normal;">Компания</div>
<div class="a" style="left:456px;top:135px;width:213px;height:1px;background:#c5d8e1"></div>
<div class="t" style="left:395.7px;top:141.99px;font-size:11px;color:#222;font-weight:normal;">Ф.И.О</div>
<div class="a" style="left:456px;top:156px;width:105px;height:1px;background:#c5d8e1"></div>
<div class="a" style="left:565px;top:156px;width:104px;height:1px;background:#c5d8e1"></div>
<div class="t" style="left:395.7px;top:163.69px;font-size:11px;color:#222;font-weight:normal;">Дополнит.</div>
<div class="a" style="left:456px;top:178px;width:213px;height:1px;background:#c5d8e1"></div>
<div class="t" style="left:395.7px;top:185.19px;font-size:11px;color:#222;font-weight:normal;">Улица/дом</div>
<div class="a" style="left:456px;top:199px;width:156px;height:1px;background:#c5d8e1"></div>
<div class="a" style="left:617px;top:199px;width:52px;height:1px;background:#c5d8e1"></div>
<div class="t" style="left:395.7px;top:206.79px;font-size:11px;color:#222;font-weight:normal;">Инд./город</div>
<div class="a" style="left:456px;top:221px;width:53px;height:1px;background:#c5d8e1"></div>
<div class="a" style="left:513px;top:221px;width:156px;height:1px;background:#c5d8e1"></div>
<div class="t" style="left:395.7px;top:228.59px;font-size:11px;color:#222;font-weight:normal;">Страна</div>
<div class="a" style="left:456px;top:243px;width:53px;height:1px;background:#c5d8e1"></div>
<div class="a" style="left:513px;top:243px;width:156px;height:1px;background:#c5d8e1"></div>
<div class="t" style="left:461.0px;top:226.19px;font-size:11px;color:#222;font-weight:normal;">AZ</div>
<div class="t" style="left:518.0px;top:226.19px;font-size:11px;color:#222;font-weight:normal;">Азербайджан</div>
<svg class="a" style="left:671px;top:117px;" width="15" height="15" viewBox="0 0 15 15" preserveAspectRatio="none"><path d="M5 0.5H10.5L14.5 4.5V12.5Q14.5 13.5 13.5 13.5H5Z" fill="#fff" stroke="#1b6a8d" stroke-width="0.8"/><path d="M1.5 2H7.5L11 5.5V13Q11 14.5 9.5 14.5H1.5Q0 14.5 0 13V3.5Q0 2 1.5 2Z" fill="#1b6a8d"/><rect x="2.5" y="7" width="6" height="1" fill="#fff"/><rect x="2.5" y="9" width="6" height="1" fill="#fff"/><rect x="2.5" y="11" width="4" height="1" fill="#fff"/></svg>
<svg class="a" style="left:672.5px;top:136px;" width="12" height="15" viewBox="0 0 12 15" preserveAspectRatio="none"><path d="M3 7V4.5Q3 1.5 6 1.5Q9 1.5 9 4.5" fill="none" stroke="#1db53a" stroke-width="1.9"/><rect x="0.5" y="7" width="11" height="8" fill="#1db53a"/><rect x="5.3" y="10" width="1.6" height="2.6" fill="#fff"/></svg>
<div class="a" style="left:702px;top:87px;width:302px;height:162px;border:1px solid #c5d8e1;box-sizing:border-box"></div>
<div class="a" style="left:707px;top:93px;width:85px;height:21px;background:#bdd3dd"></div>
<div class="t" style="left:716.6px;top:98.49px;font-size:11px;color:#1d6d90;font-weight:normal;">Отправления</div>
<div class="t" style="left:801.7px;top:98.49px;font-size:11px;color:#777;font-weight:normal;">Возврат</div>
<div class="a" style="left:707px;top:114px;width:292px;height:1px;background:#c5d8e1"></div>
<div class="a" style="left:707px;top:178px;width:292px;height:2px;background:#b9d0da"></div>
<div class="a" style="left:1013px;top:87px;width:303px;height:162px;border:1px solid #c5d8e1;box-sizing:border-box"></div>
<div class="a" style="left:1131px;top:93px;width:180px;height:81px;border:1px solid #c5d8e1;box-sizing:border-box"></div>
<div class="a" style="left:1131px;top:177px;width:156px;height:20px;border:1px solid #c5d8e1;box-sizing:border-box"></div>
<div class="a" style="left:1131px;top:200.5px;width:156px;height:19.5px;border:1px solid #c5d8e1;box-sizing:border-box"></div>
<div class="a" style="left:1131px;top:224px;width:156px;height:20px;border:1px solid #c5d8e1;box-sizing:border-box"></div>
<div class="t" style="left:1019.7px;top:129.59px;font-size:11px;color:#222;font-weight:normal;">Коммент.клиента</div>
<div class="t" style="left:1019.7px;top:183.39px;font-size:11px;color:#222;font-weight:normal;">Коммент.внутренний</div>
<div class="t" style="left:1019.7px;top:205.99px;font-size:11px;color:#222;font-weight:normal;">Коммент.для докум.</div>
<div class="t" style="left:1019.7px;top:229.89px;font-size:11px;color:#222;font-weight:normal;">История</div>
<div class="t" style="left:1137.6px;top:228.14px;font-size:12px;color:#222;font-weight:normal;">Test by Guid:</div>
<svg class="a" style="left:1274px;top:227px;" width="9" height="14" viewBox="0 0 9 14" preserveAspectRatio="none"><path d="M0.5 5.5L4.5 0.5L8.5 5.5Z" fill="#999"/><path d="M0.5 8.5L4.5 13.5L8.5 8.5Z" fill="#999"/></svg>
<svg class="a" style="left:1295px;top:180.5px;" width="14" height="14" viewBox="0 0 14 14" preserveAspectRatio="none"><rect x="5.6" y="0" width="2.8" height="14" fill="#1b6a8d"/><rect x="0" y="5.6" width="14" height="2.8" fill="#1b6a8d"/></svg>
<svg class="a" style="left:1295px;top:203.5px;" width="14" height="14" viewBox="0 0 14 14" preserveAspectRatio="none"><rect x="5.6" y="0" width="2.8" height="14" fill="#1b6a8d"/><rect x="0" y="5.6" width="14" height="2.8" fill="#1b6a8d"/></svg>
<svg class="a" style="left:1295px;top:228px;" width="14" height="11" viewBox="0 0 14 11" preserveAspectRatio="none"><path d="M0.5 5.5Q7 -2.5 13.5 5.5Q7 13.5 0.5 5.5Z" fill="#1b6a8d"/><circle cx="7" cy="5.5" r="3" fill="#fff"/><circle cx="7" cy="5.5" r="1.8" fill="#1b6a8d"/></svg>
<div class="a" style="left:78px;top:258px;width:305px;height:75px;background:#fcefd8;border:1px solid #c5d8e1;box-sizing:border-box"></div>
<div class="a" style="left:82px;top:262px;width:274px;height:19px;background:#fff;border:1px solid #c5d8e1;box-sizing:border-box"></div>
<div class="a" style="left:82px;top:286.5px;width:135px;height:19px;background:#fff;border:1px solid #c5d8e1;box-sizing:border-box"></div>
<div class="a" style="left:222px;top:286.5px;width:134px;height:19px;background:#fff;border:1px solid #c5d8e1;box-sizing:border-box"></div>
<div class="a" style="left:82px;top:310px;width:135px;height:18.5px;background:#fff;border:1px solid #c5d8e1;box-sizing:border-box"></div>
<div class="a" style="left:222px;top:309.5px;width:134px;height:18.5px;background:#fff;border:1px solid #c5d8e1;box-sizing:border-box"></div>
<div class="t" style="left:87.4px;top:266.09px;font-size:11px;color:#222;font-weight:normal;">Все</div>
<div class="t" style="left:87.4px;top:290.04px;font-size:12px;color:#222;font-weight:normal;">Все</div>
<div class="t" style="left:87.4px;top:314.19px;font-size:11px;color:#999;font-weight:normal;">Поиск заказа...</div>
<div class="t" style="left:205.6px;width:130px;text-align:right;top:290.24px;font-size:12px;color:#222;font-weight:normal;">Последние 30 дней</div>
<div class="t" style="left:210.3px;width:60px;text-align:right;top:313.79px;font-size:11px;color:#222;font-weight:normal;">Выбрать</div>
<svg class="a" style="left:337.5px;top:269.5px;" width="7" height="3.6" viewBox="0 0 7 3.6" preserveAspectRatio="none"><path d="M0 0H7L3.5 3.6Z" fill="#222"/></svg>
<svg class="a" style="left:197.0px;top:293.7px;" width="7" height="3.6" viewBox="0 0 7 3.6" preserveAspectRatio="none"><path d="M0 0H7L3.5 3.6Z" fill="#222"/></svg>
<svg class="a" style="left:337.5px;top:316.4px;" width="7" height="3.6" viewBox="0 0 7 3.6" preserveAspectRatio="none"><path d="M0 0H7L3.5 3.6Z" fill="#222"/></svg>
<svg class="a" style="left:201px;top:313.5px;" width="13" height="13" viewBox="0 0 13 13" preserveAspectRatio="none"><path d="M0.5 0.5L12.5 12.5M12.5 0.5L0.5 12.5" stroke="#7d93a8" stroke-width="1.1"/></svg>
<svg class="a" style="left:359px;top:262px;" width="20" height="18" viewBox="0 0 20 18" preserveAspectRatio="none"><path d="M10 0L20 9.5L18 11L16.5 9.7V18H11.5V12.5H8.5V18H3.5V9.7L2 11L0 9.5Z" fill="#1b6a8d"/><rect x="14" y="1" width="2.6" height="5" fill="#1b6a8d"/></svg>
<div class="a" style="left:391px;top:258px;width:787px;height:76px;border:1px solid #c5d8e1;box-sizing:border-box"></div>
<div class="t" style="left:395.8px;top:261.99px;font-size:11px;color:#222;font-weight:normal;">Количество</div>
<div class="t" style="left:395.8px;top:279.39px;font-size:11px;color:#222;font-weight:normal;">2 x</div>
<div class="t" style="left:510.0px;top:261.99px;font-size:11px;color:#222;font-weight:normal;">Наименование товара</div>
<div class="t" style="left:510.0px;top:279.39px;font-size:11px;color:#222;font-weight:normal;">тест</div>
<div class="t" style="left:707.6px;top:261.99px;font-size:11px;color:#222;font-weight:normal;">Вариант</div>
<div class="t" style="left:794.6px;top:261.99px;font-size:11px;color:#222;font-weight:normal;">Цена за единицу брутто</div>
<div class="t" style="left:794.6px;top:279.39px;font-size:11px;color:#222;font-weight:normal;">10,00</div>
<div class="t" style="left:1003.0px;top:261.99px;font-size:11px;color:#222;font-weight:normal;">Общая цена брутто</div>
<div class="t" style="left:1003.0px;top:279.39px;font-size:11px;color:#222;font-weight:normal;">20,00</div>
<svg class="a" style="left:1184px;top:263px;" width="16" height="16" viewBox="0 0 16 16" preserveAspectRatio="none"><rect x="0" y="1" width="1.3" height="13" fill="#1b6a8d"/><path d="M2.5 0H11L16 5V14Q16 16 14 16H4.5Q2.5 16 2.5 14Z" fill="#1b6a8d"/><path d="M11 0V5H16Z" fill="#fff" opacity=".7"/><rect x="5" y="7" width="8" height="1.1" fill="#fff"/><rect x="5" y="9.5" width="8" height="1.1" fill="#fff"/><rect x="5" y="12" width="6" height="1.1" fill="#fff"/></svg>
<svg class="a" style="left:1184px;top:288px;" width="16" height="22" viewBox="0 0 16 22" preserveAspectRatio="none"><path d="M3.2 10V7Q3.2 1.8 8 1.8Q12.8 1.8 12.8 7V10" fill="none" stroke="#f4574a" stroke-width="3"/><rect x="0" y="9.5" width="16" height="12.5" fill="#f4574a"/><circle cx="8" cy="14.5" r="1.4" fill="#fff"/><rect x="7.3" y="14.5" width="1.4" height="3.5" fill="#fff"/></svg>
<div class="t" style="left:1208.4px;top:264.13px;font-size:9.3px;color:#2a2a2a;font-weight:normal;letter-spacing:-0.1px">Доставка:</div>
<div class="t" style="left:1272.5px;width:60px;text-align:center;top:264.13px;font-size:9.3px;color:#2a2a2a;font-weight:normal;letter-spacing:-0.1px">0,00</div>
<div class="t" style="left:1208.4px;top:283.53px;font-size:9.3px;color:#2a2a2a;font-weight:normal;letter-spacing:-0.1px">Сумма Нетто:</div>
<div class="t" style="left:1272.5px;width:60px;text-align:center;top:283.53px;font-size:9.3px;color:#2a2a2a;font-weight:normal;letter-spacing:-0.1px">16,81</div>
<div class="t" style="left:1208.4px;top:303.53px;font-size:9.3px;color:#2a2a2a;font-weight:normal;letter-spacing:-0.1px">НДС:</div>
<div class="t" style="left:1272.5px;width:60px;text-align:center;top:303.53px;font-size:9.3px;color:#2a2a2a;font-weight:normal;letter-spacing:-0.1px">3,19</div>
<div class="t" style="left:1208.4px;top:323.53px;font-size:9.3px;color:#2a2a2a;font-weight:normal;letter-spacing:-0.1px">Сумма брутто:</div>
<div class="t" style="left:1272.5px;width:60px;text-align:center;top:323.53px;font-size:9.3px;color:#2a2a2a;font-weight:normal;letter-spacing:-0.1px">20,00</div>
<div class="a" style="left:78px;top:343px;width:20px;height:20px;background:#eef4f7;border:1px solid #b9d1dc;box-sizing:border-box"></div>
<div class="a" style="left:102px;top:343px;width:20px;height:20px;background:#eef4f7;border:1px solid #b9d1dc;box-sizing:border-box"></div>
<div class="a" style="left:127px;top:343px;width:20px;height:20px;background:#eef4f7;border:1px solid #b9d1dc;box-sizing:border-box"></div>
<div class="a" style="left:151px;top:343px;width:20px;height:20px;background:#eef4f7;border:1px solid #b9d1dc;box-sizing:border-box"></div>
<div class="a" style="left:175px;top:343px;width:20px;height:20px;background:#fff;border:1px solid #e6e6e6;box-sizing:border-box"></div>
<div class="a" style="left:200px;top:343px;width:20px;height:20px;background:#fff;border:1px solid #e6e6e6;box-sizing:border-box"></div>
<div class="a" style="left:225px;top:343px;width:20px;height:20px;background:#fff;border:1px solid #e6e6e6;box-sizing:border-box"></div>
<div class="a" style="left:250px;top:343px;width:20px;height:20px;background:#fff;border:1px solid #e6e6e6;box-sizing:border-box"></div>
<div class="a" style="left:275px;top:343px;width:20px;height:20px;background:#fff;border:1px solid #e6e6e6;box-sizing:border-box"></div>
<div class="a" style="left:300px;top:343px;width:20px;height:20px;background:#fff;border:1px solid #e6e6e6;box-sizing:border-box"></div>
<svg class="a" style="left:80.5px;top:346.0px;" width="15" height="14" viewBox="0 0 15 14" preserveAspectRatio="none"><rect x="6" y="0" width="2.8" height="14" fill="#1b6a8d"/><rect x="0" y="5.6" width="14.6" height="2.8" fill="#1b6a8d"/></svg>
<svg class="a" style="left:105.5px;top:346.5px;" width="13" height="13" viewBox="0 0 13 13" preserveAspectRatio="none"><path d="M0 13L1 9L9.5 0.5L12.5 3.5L4 12Z" fill="#1b6a8d"/><path d="M10.6 0L13 2.4" stroke="#1b6a8d" stroke-width="1"/></svg>
<svg class="a" style="left:130.0px;top:346.0px;" width="14" height="14" viewBox="0 0 14 14" preserveAspectRatio="none"><path d="M6 0.5H10.5L13.5 3.5V12.5H6Z" fill="#fff" stroke="#1b6a8d" stroke-width="0.8"/><path d="M1.5 1.5H7.5L10 4V12.5Q10 14 8.5 14H1.5Q0 14 0 12.5V3Q0 1.5 1.5 1.5Z" fill="#1b6a8d"/><rect x="2" y="7" width="5" height="4" fill="#fff" opacity=".25"/></svg>
<svg class="a" style="left:155.5px;top:346.0px;" width="11" height="14" viewBox="0 0 11 14" preserveAspectRatio="none"><rect x="3.5" y="0" width="4" height="1.5" rx=".6" fill="#1b6a8d"/><rect x="0" y="1.5" width="11" height="2" rx=".8" fill="#1b6a8d"/><path d="M1 4.2H10V12.5Q10 13.5 9 13.5H2Q1 13.5 1 12.5Z" fill="#1b6a8d"/><path d="M3 6V12M4.5 6V12M6 6V12M7.5 6V12" stroke="#fff" stroke-width=".6" opacity=".6"/></svg>
<svg class="a" style="left:179.0px;top:347.0px;" width="12" height="12" viewBox="0 0 12 12" preserveAspectRatio="none"><path d="M0 0H12L7.3 5.5V11.5H4.7V5.5Z" fill="#bfd5df"/></svg>
<svg class="a" style="left:204.0px;top:347.0px;" width="12" height="12" viewBox="0 0 12 12" preserveAspectRatio="none"><path d="M1 1L11 11M11 1L1 11" stroke="#ee1111" stroke-width="2.3"/></svg>
<svg class="a" style="left:228.0px;top:346.0px;" width="14" height="14" viewBox="0 0 14 14" preserveAspectRatio="none"><rect x="1" y="0" width="12" height="2" fill="#1b6a8d"/><rect x="0" y="3.5" width="2" height="1.5" fill="#1b6a8d"/><rect x="0" y="6.5" width="2" height="1.5" fill="#1b6a8d"/><circle cx="8" cy="8" r="3" fill="none" stroke="#1b6a8d" stroke-width="1.4"/><path d="M10.2 10.2L13 13" stroke="#1b6a8d" stroke-width="1.6"/></svg>
<svg class="a" style="left:253.5px;top:347.0px;" width="13" height="12" viewBox="0 0 13 12" preserveAspectRatio="none"><path d="M4.5 0H8.5V4H11L6.5 8L2 4H4.5Z" fill="#9fc2d2"/><path d="M0 7V11H13V7" fill="none" stroke="#9fc2d2" stroke-width="2"/></svg>
<svg class="a" style="left:278.5px;top:347.0px;" width="13" height="12" viewBox="0 0 13 12" preserveAspectRatio="none"><path d="M4.5 8V4H2L6.5 0L11 4H8.5V8Z" fill="#1b6a8d"/><path d="M0 7V11H13V7" fill="none" stroke="#1b6a8d" stroke-width="2"/></svg>
<svg class="a" style="left:304.0px;top:346.5px;" width="12" height="13" viewBox="0 0 12 13" preserveAspectRatio="none"><path d="M0 1H6V2.5H1.5V12H0Z" fill="#1b6a8d"/><path d="M2.5 3.5H8.5L12 7V13H2.5Z" fill="#1b6a8d"/><path d="M8.5 3.5V7H12" fill="none" stroke="#fff" stroke-width=".8"/></svg>
<div class="a" style="left:1112px;top:343px;width:75px;height:22.5px;background:#bdd3dd"></div>
<div class="t" style="left:1121.3px;top:348.39px;font-size:11px;color:#1d6d90;font-weight:normal;">Избранные</div>
<div class="t" style="left:1196.4px;top:348.39px;font-size:11px;color:#777;font-weight:normal;">Избранные old</div>
<div class="t" style="left:1289.4px;top:348.39px;font-size:11px;color:#777;font-weight:normal;">Все</div>
<div class="a" style="left:78px;top:365px;width:1238px;height:1px;background:#b6cdd8"></div>
<div class="a" style="left:78px;top:366px;width:1238px;height:1px;background:#e3e5e6"></div>
<div class="a" style="left:78px;top:367px;width:1px;height:254px;background:#dcdcdc"></div>
<div class="a" style="left:1315px;top:367px;width:1px;height:254px;background:#dcdcdc"></div>
<div class="a" style="left:78px;top:388px;width:1238px;height:2px;background:#dddddd"></div>
<div class="a" style="left:79px;top:466px;width:1236px;height:18px;background:#b4b9b9"></div>
<div class="a" style="left:106px;top:367px;width:1px;height:237px;background:#dcdcdc"></div>
<div class="a" style="left:146px;top:367px;width:1px;height:237px;background:#dcdcdc"></div>
<div class="a" style="left:191px;top:367px;width:1px;height:237px;background:#dcdcdc"></div>
<div class="a" style="left:298px;top:367px;width:1px;height:237px;background:#dcdcdc"></div>
<div class="a" style="left:384px;top:367px;width:1px;height:237px;background:#dcdcdc"></div>
<div class="a" style="left:497px;top:367px;width:1px;height:237px;background:#dcdcdc"></div>
<div class="a" style="left:528px;top:367px;width:1px;height:237px;background:#dcdcdc"></div>
<div class="a" style="left:640px;top:367px;width:1px;height:237px;background:#dcdcdc"></div>
<div class="a" style="left:759px;top:367px;width:1px;height:237px;background:#dcdcdc"></div>
<div class="a" style="left:871px;top:367px;width:1px;height:237px;background:#dcdcdc"></div>
<div class="a" style="left:984px;top:367px;width:1px;height:237px;background:#dcdcdc"></div>
<div class="a" style="left:1096px;top:367px;width:1px;height:237px;background:#dcdcdc"></div>
<div class="a" style="left:1135px;top:367px;width:1px;height:237px;background:#dcdcdc"></div>
<div class="a" style="left:78px;top:408px;width:1238px;height:1px;background:#e0e0e0"></div>
<div class="a" style="left:78px;top:427px;width:1238px;height:1px;background:#e0e0e0"></div>
<div class="a" style="left:78px;top:446px;width:1238px;height:1px;background:#e0e0e0"></div>
<div class="a" style="left:78px;top:465px;width:1238px;height:1px;background:#e0e0e0"></div>
<div class="a" style="left:78px;top:484px;width:1238px;height:1px;background:#e0e0e0"></div>
<div class="a" style="left:78px;top:503px;width:1238px;height:1px;background:#e0e0e0"></div>
<div class="a" style="left:78px;top:522px;width:1238px;height:1px;background:#e0e0e0"></div>
<div class="a" style="left:78px;top:541px;width:1238px;height:1px;background:#e0e0e0"></div>
<div class="a" style="left:78px;top:560px;width:1238px;height:1px;background:#e0e0e0"></div>
<div class="a" style="left:78px;top:579px;width:1238px;height:1px;background:#e0e0e0"></div>
<div class="a" style="left:78px;top:598px;width:1238px;height:1px;background:#e0e0e0"></div>
<div class="a" style="left:78px;top:604px;width:1238px;height:1px;background:#dcdcdc"></div>
<div class="a" style="left:78px;top:620px;width:1238px;height:1px;background:#dcdcdc"></div>
<svg class="a" style="left:85.5px;top:369.5px;" width="13" height="14" viewBox="0 0 13 14" preserveAspectRatio="none"><rect x="0.5" y="0.5" width="12" height="13" rx="1.5" fill="#fff" stroke="#d9d9d9"/><rect x="4" y="4.5" width="5.5" height="5.5" fill="#1c84c6"/></svg>
<div class="t" style="left:103.0px;width:40px;text-align:right;top:371.16px;font-size:10.8px;color:#959595;font-weight:normal;">ID</div>
<div class="t" style="left:150.3px;top:371.16px;font-size:10.8px;color:#959595;font-weight:normal;">Аккау...</div>
<div class="t" style="left:195.0px;top:371.16px;font-size:10.8px;color:#959595;font-weight:normal;">Название мандата</div>
<div class="t" style="left:302.3px;top:371.16px;font-size:10.8px;color:#959595;font-weight:normal;">Номер накла...</div>
<div class="t" style="left:388.6px;top:371.16px;font-size:10.8px;color:#959595;font-weight:normal;">Номер заказа</div>
<div class="t" style="left:501.2px;top:371.16px;font-size:10.8px;color:#959595;font-weight:normal;">Те...</div>
<div class="t" style="left:531.4px;top:371.16px;font-size:10.8px;color:#959595;font-weight:normal;">Статус заказа</div>
<div class="t" style="left:644.0px;top:371.16px;font-size:10.8px;color:#959595;font-weight:normal;">Статус оплаты</div>
<div class="t" style="left:763.0px;top:371.16px;font-size:10.8px;color:#959595;font-weight:normal;">Статус доставки</div>
<div class="t" style="left:875.3px;top:371.16px;font-size:10.8px;color:#959595;font-weight:normal;">Аккаунт продавца ...</div>
<div class="t" style="left:987.6px;top:371.16px;font-size:10.8px;color:#959595;font-weight:normal;">Необходима доста...</div>
<div class="t" style="left:1100.2px;top:371.16px;font-size:10.8px;color:#959595;font-weight:normal;">Статус</div>
<div class="t" style="left:1165.4px;width:120px;text-align:center;top:371.16px;font-size:10.8px;color:#959595;font-weight:normal;">Предупреждения</div>
<div class="a" style="left:78px;top:390px;width:1238px;height:214px;overflow:hidden">
<div class="t" style="left:26.0px;width:40px;text-align:right;top:4.03px;font-size:10.6px;color:#303030;font-weight:normal;;-webkit-text-stroke:0.05px currentColor">98</div>
<div class="t" style="left:71.4px;top:4.03px;font-size:10.6px;color:#303030;font-weight:normal;;-webkit-text-stroke:0.05px currentColor">Default</div>
<div class="t" style="left:116.4px;top:4.03px;font-size:10.6px;color:#303030;font-weight:normal;;-webkit-text-stroke:0.05px currentColor">Default</div>
<div class="t" style="left:223.4px;top:4.03px;font-size:10.6px;color:#303030;font-weight:normal;;-webkit-text-stroke:0.05px currentColor"></div>
<div class="t" style="left:310.0px;top:4.03px;font-size:10.6px;color:#303030;font-weight:normal;;-webkit-text-stroke:0.05px currentColor"></div>
<div class="t" style="left:422.4px;top:4.03px;font-size:10.6px;color:#303030;font-weight:normal;;-webkit-text-stroke:0.05px currentColor"></div>
<div class="t" style="left:452.8px;top:4.03px;font-size:10.6px;color:#303030;font-weight:normal;;-webkit-text-stroke:0.05px currentColor">Pending</div>
<div class="t" style="left:564.9px;top:4.03px;font-size:10.6px;color:#303030;font-weight:normal;letter-spacing:-0.08px;-webkit-text-stroke:0.05px currentColor">ReadyToBePaid</div>
<div class="t" style="left:683.9px;top:4.03px;font-size:10.6px;color:#303030;font-weight:normal;;-webkit-text-stroke:0.05px currentColor">NotInitialized</div>
<div class="t" style="left:796.4px;top:4.03px;font-size:10.6px;color:#303030;font-weight:normal;;-webkit-text-stroke:0.05px currentColor">Default</div>
<svg class="a" style="left:955.5px;top:1.2px;" width="14" height="14" viewBox="0 0 14 14" preserveAspectRatio="none"><rect x="0.5" y="0.5" width="13" height="13" rx="1.5" fill="#fff" stroke="#efefef"/><path d="M2.4 6.1L6 9.2L12.3 2.9" fill="none" stroke="#1c84c6" stroke-width="1.7"/></svg>
<svg class="a" style="left:1112px;top:1.5px;" width="16" height="13.5" viewBox="0 0 16 13.5" preserveAspectRatio="none"><path d="M4.5 2.5Q4.5 0 6.5 0H9.5Q11.5 0 11.5 2.5Z" fill="#1b6a8d"/><rect x="0" y="2" width="16" height="11" rx="2.5" fill="#1b6a8d"/><rect x="4.5" y="4" width="7" height="7" fill="#9fc2d2"/><rect x="6" y="5.5" width="4" height="4" fill="#1b6a8d"/><path d="M1.8 0.6L13.8 13.2M13.8 0.6L1.8 13.2" stroke="#ea1010" stroke-width="1.9"/></svg>
<svg class="a" style="left:1134.7px;top:2px;" width="16" height="14" viewBox="0 0 16 14" preserveAspectRatio="none"><path d="M14.2 2A6.3 6.3 0 1 0 14.2 11" fill="none" stroke="#9fc2d2" stroke-width="1.8"/><rect x="0.3" y="4.3" width="11" height="1.4" fill="#9fc2d2"/><rect x="0.3" y="7.3" width="11" height="1.4" fill="#9fc2d2"/></svg>
<svg class="a" style="left:1158.2px;top:1px;" width="16" height="15" viewBox="0 0 16 15" preserveAspectRatio="none"><path d="M8 0L15.5 2.6L8 5.2L0.5 2.6Z" fill="#9fc2d2"/><path d="M0 3.9L7.2 6.6V15L0 12.3Z" fill="#9fc2d2"/><path d="M16 3.9L8.8 6.6V15L16 12.3Z" fill="#9fc2d2"/></svg>
<svg class="a" style="left:1185px;top:2px;" width="16" height="15" viewBox="0 0 16 15" preserveAspectRatio="none"><rect x="0" y="1.5" width="1.1" height="11" fill="#9fc2d2"/><path d="M2.6 0H8.6L12.8 4.2V10.5Q12.8 12.8 10.5 12.8H2.6Z" fill="#9fc2d2"/><path d="M8.4 1.6V4.4H11.2Z" fill="#fff" opacity=".8"/><rect x="4" y="6" width="6" height="1" fill="#fff"/><rect x="4" y="8" width="6" height="1" fill="#fff"/><rect x="4" y="10" width="4" height="1" fill="#fff"/><circle cx="12.90" cy="12.10" r="3.60" fill="#fff"/><polygon points="12.90,9.30 13.69,11.21 15.75,11.37 14.18,12.72 14.66,14.73 12.90,13.65 11.14,14.73 11.62,12.72 10.05,11.37 12.11,11.21" fill="#9fc2d2"/></svg>
<svg class="a" style="left:1209.5px;top:2px;" width="24" height="16" viewBox="0 0 24 16" preserveAspectRatio="none"><rect x="0" y="0" width="20" height="12.5" fill="#9fc2d2"/><path d="M0.3 0.6L10 7.5L19.7 0.6M0.3 12L7.3 5.6M19.7 12L12.7 5.6" fill="none" stroke="#fff" stroke-width="0.9"/><circle cx="19.5" cy="12.5" r="3.8" fill="#fff"/><polygon points="19.60,9.50 20.47,11.60 22.74,11.78 21.01,13.26 21.54,15.47 19.60,14.29 17.66,15.47 18.19,13.26 16.46,11.78 18.73,11.60" fill="#9fc2d2"/></svg>
<div class="t" style="left:26.0px;width:40px;text-align:right;top:23.03px;font-size:10.6px;color:#303030;font-weight:normal;;-webkit-text-stroke:0.05px currentColor">100</div>
<div class="t" style="left:71.4px;top:23.03px;font-size:10.6px;color:#303030;font-weight:normal;;-webkit-text-stroke:0.05px currentColor">Тест</div>
<div class="t" style="left:116.4px;top:23.03px;font-size:10.6px;color:#303030;font-weight:normal;;-webkit-text-stroke:0.05px currentColor">Тест</div>
<div class="t" style="left:223.4px;top:23.03px;font-size:10.6px;color:#303030;font-weight:normal;;-webkit-text-stroke:0.05px currentColor"></div>
<div class="t" style="left:310.0px;top:23.03px;font-size:10.6px;color:#303030;font-weight:normal;;-webkit-text-stroke:0.05px currentColor"></div>
<div class="t" style="left:422.4px;top:23.03px;font-size:10.6px;color:#303030;font-weight:normal;;-webkit-text-stroke:0.05px currentColor"></div>
<div class="t" style="left:452.8px;top:23.03px;font-size:10.6px;color:#303030;font-weight:normal;;-webkit-text-stroke:0.05px currentColor">Pending</div>
<div class="t" style="left:564.9px;top:23.03px;font-size:10.6px;color:#303030;font-weight:normal;letter-spacing:-0.08px;-webkit-text-stroke:0.05px currentColor">ReadyToBePaid</div>
<div class="t" style="left:683.9px;top:23.03px;font-size:10.6px;color:#303030;font-weight:normal;;-webkit-text-stroke:0.05px currentColor">NotInitialized</div>
<div class="t" style="left:796.4px;top:23.03px;font-size:10.6px;color:#303030;font-weight:normal;;-webkit-text-stroke:0.05px currentColor">Тест</div>
<svg class="a" style="left:955.5px;top:20.2px;" width="14" height="14" viewBox="0 0 14 14" preserveAspectRatio="none"><rect x="0.5" y="0.5" width="13" height="13" rx="1.5" fill="#fff" stroke="#efefef"/><path d="M2.4 6.1L6 9.2L12.3 2.9" fill="none" stroke="#1c84c6" stroke-width="1.7"/></svg>
<svg class="a" style="left:1112px;top:20.5px;" width="16" height="13.5" viewBox="0 0 16 13.5" preserveAspectRatio="none"><path d="M4.5 2.5Q4.5 0 6.5 0H9.5Q11.5 0 11.5 2.5Z" fill="#1b6a8d"/><rect x="0" y="2" width="16" height="11" rx="2.5" fill="#1b6a8d"/><rect x="4.5" y="4" width="7" height="7" fill="#9fc2d2"/><rect x="6" y="5.5" width="4" height="4" fill="#1b6a8d"/><path d="M1.8 0.6L13.8 13.2M13.8 0.6L1.8 13.2" stroke="#ea1010" stroke-width="1.9"/></svg>
<svg class="a" style="left:1134.7px;top:21px;" width="16" height="14" viewBox="0 0 16 14" preserveAspectRatio="none"><path d="M14.2 2A6.3 6.3 0 1 0 14.2 11" fill="none" stroke="#9fc2d2" stroke-width="1.8"/><rect x="0.3" y="4.3" width="11" height="1.4" fill="#9fc2d2"/><rect x="0.3" y="7.3" width="11" height="1.4" fill="#9fc2d2"/></svg>
<svg class="a" style="left:1158.2px;top:20px;" width="16" height="15" viewBox="0 0 16 15" preserveAspectRatio="none"><path d="M8 0L15.5 2.6L8 5.2L0.5 2.6Z" fill="#9fc2d2"/><path d="M0 3.9L7.2 6.6V15L0 12.3Z" fill="#9fc2d2"/><path d="M16 3.9L8.8 6.6V15L16 12.3Z" fill="#9fc2d2"/></svg>
<svg class="a" style="left:1185px;top:21px;" width="16" height="15" viewBox="0 0 16 15" preserveAspectRatio="none"><rect x="0" y="1.5" width="1.1" height="11" fill="#9fc2d2"/><path d="M2.6 0H8.6L12.8 4.2V10.5Q12.8 12.8 10.5 12.8H2.6Z" fill="#9fc2d2"/><path d="M8.4 1.6V4.4H11.2Z" fill="#fff" opacity=".8"/><rect x="4" y="6" width="6" height="1" fill="#fff"/><rect x="4" y="8" width="6" height="1" fill="#fff"/><rect x="4" y="10" width="4" height="1" fill="#fff"/><circle cx="12.90" cy="12.10" r="3.60" fill="#fff"/><polygon points="12.90,9.30 13.69,11.21 15.75,11.37 14.18,12.72 14.66,14.73 12.90,13.65 11.14,14.73 11.62,12.72 10.05,11.37 12.11,11.21" fill="#9fc2d2"/></svg>
<svg class="a" style="left:1209.5px;top:21px;" width="24" height="16" viewBox="0 0 24 16" preserveAspectRatio="none"><rect x="0" y="0" width="20" height="12.5" fill="#9fc2d2"/><path d="M0.3 0.6L10 7.5L19.7 0.6M0.3 12L7.3 5.6M19.7 12L12.7 5.6" fill="none" stroke="#fff" stroke-width="0.9"/><circle cx="19.5" cy="12.5" r="3.8" fill="#fff"/><polygon points="19.60,9.50 20.47,11.60 22.74,11.78 21.01,13.26 21.54,15.47 19.60,14.29 17.66,15.47 18.19,13.26 16.46,11.78 18.73,11.60" fill="#9fc2d2"/></svg>
<div class="t" style="left:26.0px;width:40px;text-align:right;top:42.03px;font-size:10.6px;color:#303030;font-weight:normal;;-webkit-text-stroke:0.05px currentColor">101</div>
<div class="t" style="left:71.4px;top:42.03px;font-size:10.6px;color:#303030;font-weight:normal;;-webkit-text-stroke:0.05px currentColor">Тест</div>
<div class="t" style="left:116.4px;top:42.03px;font-size:10.6px;color:#303030;font-weight:normal;;-webkit-text-stroke:0.05px currentColor">Тест</div>
<div class="t" style="left:223.4px;top:42.03px;font-size:10.6px;color:#303030;font-weight:normal;;-webkit-text-stroke:0.05px currentColor"></div>
<div class="t" style="left:310.0px;top:42.03px;font-size:10.6px;color:#303030;font-weight:normal;;-webkit-text-stroke:0.05px currentColor"></div>
<div class="t" style="left:422.4px;top:42.03px;font-size:10.6px;color:#303030;font-weight:normal;;-webkit-text-stroke:0.05px currentColor"></div>
<div class="t" style="left:452.8px;top:42.03px;font-size:10.6px;color:#303030;font-weight:normal;;-webkit-text-stroke:0.05px currentColor">Pending</div>
<div class="t" style="left:564.9px;top:42.03px;font-size:10.6px;color:#303030;font-weight:normal;letter-spacing:-0.08px;-webkit-text-stroke:0.05px currentColor">ReadyToBePaid</div>
<div class="t" style="left:683.9px;top:42.03px;font-size:10.6px;color:#303030;font-weight:normal;;-webkit-text-stroke:0.05px currentColor">NotInitialized</div>
<div class="t" style="left:796.4px;top:42.03px;font-size:10.6px;color:#303030;font-weight:normal;;-webkit-text-stroke:0.05px currentColor">Тест</div>
<svg class="a" style="left:955.5px;top:39.2px;" width="14" height="14" viewBox="0 0 14 14" preserveAspectRatio="none"><rect x="0.5" y="0.5" width="13" height="13" rx="1.5" fill="#fff" stroke="#efefef"/><path d="M2.4 6.1L6 9.2L12.3 2.9" fill="none" stroke="#1c84c6" stroke-width="1.7"/></svg>
<svg class="a" style="left:1112px;top:39.5px;" width="16" height="13.5" viewBox="0 0 16 13.5" preserveAspectRatio="none"><path d="M4.5 2.5Q4.5 0 6.5 0H9.5Q11.5 0 11.5 2.5Z" fill="#1b6a8d"/><rect x="0" y="2" width="16" height="11" rx="2.5" fill="#1b6a8d"/><rect x="4.5" y="4" width="7" height="7" fill="#9fc2d2"/><rect x="6" y="5.5" width="4" height="4" fill="#1b6a8d"/><path d="M1.8 0.6L13.8 13.2M13.8 0.6L1.8 13.2" stroke="#ea1010" stroke-width="1.9"/></svg>
<svg class="a" style="left:1134.7px;top:40px;" width="16" height="14" viewBox="0 0 16 14" preserveAspectRatio="none"><path d="M14.2 2A6.3 6.3 0 1 0 14.2 11" fill="none" stroke="#9fc2d2" stroke-width="1.8"/><rect x="0.3" y="4.3" width="11" height="1.4" fill="#9fc2d2"/><rect x="0.3" y="7.3" width="11" height="1.4" fill="#9fc2d2"/></svg>
<svg class="a" style="left:1158.2px;top:39px;" width="16" height="15" viewBox="0 0 16 15" preserveAspectRatio="none"><path d="M8 0L15.5 2.6L8 5.2L0.5 2.6Z" fill="#9fc2d2"/><path d="M0 3.9L7.2 6.6V15L0 12.3Z" fill="#9fc2d2"/><path d="M16 3.9L8.8 6.6V15L16 12.3Z" fill="#9fc2d2"/></svg>
<svg class="a" style="left:1185px;top:40px;" width="16" height="15" viewBox="0 0 16 15" preserveAspectRatio="none"><rect x="0" y="1.5" width="1.1" height="11" fill="#9fc2d2"/><path d="M2.6 0H8.6L12.8 4.2V10.5Q12.8 12.8 10.5 12.8H2.6Z" fill="#9fc2d2"/><path d="M8.4 1.6V4.4H11.2Z" fill="#fff" opacity=".8"/><rect x="4" y="6" width="6" height="1" fill="#fff"/><rect x="4" y="8" width="6" height="1" fill="#fff"/><rect x="4" y="10" width="4" height="1" fill="#fff"/><circle cx="12.90" cy="12.10" r="3.60" fill="#fff"/><polygon points="12.90,9.30 13.69,11.21 15.75,11.37 14.18,12.72 14.66,14.73 12.90,13.65 11.14,14.73 11.62,12.72 10.05,11.37 12.11,11.21" fill="#9fc2d2"/></svg>
<svg class="a" style="left:1209.5px;top:40px;" width="24" height="16" viewBox="0 0 24 16" preserveAspectRatio="none"><rect x="0" y="0" width="20" height="12.5" fill="#9fc2d2"/><path d="M0.3 0.6L10 7.5L19.7 0.6M0.3 12L7.3 5.6M19.7 12L12.7 5.6" fill="none" stroke="#fff" stroke-width="0.9"/><circle cx="19.5" cy="12.5" r="3.8" fill="#fff"/><polygon points="19.60,9.50 20.47,11.60 22.74,11.78 21.01,13.26 21.54,15.47 19.60,14.29 17.66,15.47 18.19,13.26 16.46,11.78 18.73,11.60" fill="#9fc2d2"/></svg>
<div class="t" style="left:26.0px;width:40px;text-align:right;top:61.03px;font-size:10.6px;color:#303030;font-weight:normal;;-webkit-text-stroke:0.05px currentColor">95</div>
<div class="t" style="left:71.4px;top:61.03px;font-size:10.6px;color:#303030;font-weight:normal;;-webkit-text-stroke:0.05px currentColor">Тест 3</div>
<div class="t" style="left:116.4px;top:61.03px;font-size:10.6px;color:#303030;font-weight:normal;;-webkit-text-stroke:0.05px currentColor">Тест 3</div>
<div class="t" style="left:223.4px;top:61.03px;font-size:10.6px;color:#303030;font-weight:normal;;-webkit-text-stroke:0.05px currentColor"></div>
<div class="t" style="left:310.0px;top:61.03px;font-size:10.6px;color:#303030;font-weight:normal;;-webkit-text-stroke:0.05px currentColor"></div>
<div class="t" style="left:422.4px;top:61.03px;font-size:10.6px;color:#303030;font-weight:normal;;-webkit-text-stroke:0.05px currentColor"></div>
<div class="t" style="left:452.8px;top:61.03px;font-size:10.6px;color:#303030;font-weight:normal;;-webkit-text-stroke:0.05px currentColor">Active</div>
<div class="t" style="left:564.9px;top:61.03px;font-size:10.6px;color:#303030;font-weight:normal;;-webkit-text-stroke:0.05px currentColor">Paid</div>
<div class="t" style="left:683.9px;top:61.03px;font-size:10.6px;color:#303030;font-weight:normal;;-webkit-text-stroke:0.05px currentColor">ReadyToBeShipped</div>
<div class="t" style="left:796.4px;top:61.03px;font-size:10.6px;color:#303030;font-weight:normal;;-webkit-text-stroke:0.05px currentColor">Тест 3</div>
<svg class="a" style="left:955.5px;top:58.2px;" width="14" height="14" viewBox="0 0 14 14" preserveAspectRatio="none"><rect x="0.5" y="0.5" width="13" height="13" rx="1.5" fill="#fff" stroke="#efefef"/><path d="M2.4 6.1L6 9.2L12.3 2.9" fill="none" stroke="#1c84c6" stroke-width="1.7"/></svg>
<svg class="a" style="left:1112px;top:58.5px;" width="16" height="13.5" viewBox="0 0 16 13.5" preserveAspectRatio="none"><path d="M4.5 2.5Q4.5 0 6.5 0H9.5Q11.5 0 11.5 2.5Z" fill="#1b6a8d"/><rect x="0" y="2" width="16" height="11" rx="2.5" fill="#1b6a8d"/><rect x="4.5" y="4" width="7" height="7" fill="#9fc2d2"/><rect x="6" y="5.5" width="4" height="4" fill="#1b6a8d"/><path d="M1.8 0.6L13.8 13.2M13.8 0.6L1.8 13.2" stroke="#ea1010" stroke-width="1.9"/></svg>
<svg class="a" style="left:1134.7px;top:59px;" width="16" height="14" viewBox="0 0 16 14" preserveAspectRatio="none"><path d="M14.2 2A6.3 6.3 0 1 0 14.2 11" fill="none" stroke="#1b6a8d" stroke-width="1.8"/><rect x="0.3" y="4.3" width="11" height="1.4" fill="#1b6a8d"/><rect x="0.3" y="7.3" width="11" height="1.4" fill="#1b6a8d"/></svg>
<svg class="a" style="left:1158.2px;top:58px;" width="16" height="15" viewBox="0 0 16 15" preserveAspectRatio="none"><path d="M8 0L15.5 2.6L8 5.2L0.5 2.6Z" fill="#1b6a8d"/><path d="M0 3.9L7.2 6.6V15L0 12.3Z" fill="#1b6a8d"/><path d="M16 3.9L8.8 6.6V15L16 12.3Z" fill="#1b6a8d"/></svg>
<svg class="a" style="left:1185px;top:59px;" width="16" height="15" viewBox="0 0 16 15" preserveAspectRatio="none"><rect x="0" y="1.5" width="1.1" height="11" fill="#9fc2d2"/><path d="M2.6 0H8.6L12.8 4.2V10.5Q12.8 12.8 10.5 12.8H2.6Z" fill="#9fc2d2"/><path d="M8.4 1.6V4.4H11.2Z" fill="#fff" opacity=".8"/><rect x="4" y="6" width="6" height="1" fill="#fff"/><rect x="4" y="8" width="6" height="1" fill="#fff"/><rect x="4" y="10" width="4" height="1" fill="#fff"/><circle cx="12.90" cy="12.10" r="3.60" fill="#fff"/><polygon points="12.90,9.30 13.69,11.21 15.75,11.37 14.18,12.72 14.66,14.73 12.90,13.65 11.14,14.73 11.62,12.72 10.05,11.37 12.11,11.21" fill="#9fc2d2"/></svg>
<svg class="a" style="left:1209.5px;top:59px;" width="24" height="16" viewBox="0 0 24 16" preserveAspectRatio="none"><rect x="0" y="0" width="20" height="12.5" fill="#9fc2d2"/><path d="M0.3 0.6L10 7.5L19.7 0.6M0.3 12L7.3 5.6M19.7 12L12.7 5.6" fill="none" stroke="#fff" stroke-width="0.9"/><circle cx="19.5" cy="12.5" r="3.8" fill="#fff"/><polygon points="19.60,9.50 20.47,11.60 22.74,11.78 21.01,13.26 21.54,15.47 19.60,14.29 17.66,15.47 18.19,13.26 16.46,11.78 18.73,11.60" fill="#9fc2d2"/></svg>
<div class="t" style="left:26.0px;width:40px;text-align:right;top:80.03px;font-size:10.6px;color:#303030;font-weight:normal;;-webkit-text-stroke:0.05px currentColor">94</div>
<div class="t" style="left:71.4px;top:80.03px;font-size:10.6px;color:#303030;font-weight:normal;;-webkit-text-stroke:0.05px currentColor">Проф...</div>
<div class="t" style="left:116.4px;top:80.03px;font-size:10.6px;color:#303030;font-weight:normal;;-webkit-text-stroke:0.05px currentColor">Тест 2</div>
<div class="t" style="left:223.4px;top:80.03px;font-size:10.6px;color:#303030;font-weight:normal;;-webkit-text-stroke:0.05px currentColor"></div>
<div class="t" style="left:310.0px;top:80.03px;font-size:10.6px;color:#303030;font-weight:normal;;-webkit-text-stroke:0.05px currentColor"></div>
<div class="t" style="left:422.4px;top:80.03px;font-size:10.6px;color:#303030;font-weight:normal;;-webkit-text-stroke:0.05px currentColor"></div>
<div class="t" style="left:452.8px;top:80.03px;font-size:10.6px;color:#303030;font-weight:normal;;-webkit-text-stroke:0.05px currentColor">Active</div>
<div class="t" style="left:564.9px;top:80.03px;font-size:10.6px;color:#303030;font-weight:normal;;-webkit-text-stroke:0.05px currentColor">Paid</div>
<div class="t" style="left:683.9px;top:80.03px;font-size:10.6px;color:#303030;font-weight:normal;;-webkit-text-stroke:0.05px currentColor">ReadyToBeShipped</div>
<div class="t" style="left:796.4px;top:80.03px;font-size:10.6px;color:#303030;font-weight:normal;;-webkit-text-stroke:0.05px currentColor">Профиль продавца ...</div>
<svg class="a" style="left:955.5px;top:77.2px;" width="14" height="14" viewBox="0 0 14 14" preserveAspectRatio="none"><rect x="0.5" y="0.5" width="13" height="13" rx="1.5" fill="#fff" stroke="#efefef"/><path d="M2.4 6.1L6 9.2L12.3 2.9" fill="none" stroke="#1c84c6" stroke-width="1.7"/></svg>
<svg class="a" style="left:1112px;top:77.5px;" width="16" height="13.5" viewBox="0 0 16 13.5" preserveAspectRatio="none"><path d="M4.5 2.5Q4.5 0 6.5 0H9.5Q11.5 0 11.5 2.5Z" fill="#1b6a8d"/><rect x="0" y="2" width="16" height="11" rx="2.5" fill="#1b6a8d"/><rect x="4.5" y="4" width="7" height="7" fill="#9fc2d2"/><rect x="6" y="5.5" width="4" height="4" fill="#1b6a8d"/><path d="M1.8 0.6L13.8 13.2M13.8 0.6L1.8 13.2" stroke="#ea1010" stroke-width="1.9"/></svg>
<svg class="a" style="left:1134.7px;top:78px;" width="16" height="14" viewBox="0 0 16 14" preserveAspectRatio="none"><path d="M14.2 2A6.3 6.3 0 1 0 14.2 11" fill="none" stroke="#1b6a8d" stroke-width="1.8"/><rect x="0.3" y="4.3" width="11" height="1.4" fill="#1b6a8d"/><rect x="0.3" y="7.3" width="11" height="1.4" fill="#1b6a8d"/></svg>
<svg class="a" style="left:1158.2px;top:77px;" width="16" height="15" viewBox="0 0 16 15" preserveAspectRatio="none"><path d="M8 0L15.5 2.6L8 5.2L0.5 2.6Z" fill="#1b6a8d"/><path d="M0 3.9L7.2 6.6V15L0 12.3Z" fill="#1b6a8d"/><path d="M16 3.9L8.8 6.6V15L16 12.3Z" fill="#1b6a8d"/></svg>
<svg class="a" style="left:1185px;top:78px;" width="16" height="15" viewBox="0 0 16 15" preserveAspectRatio="none"><rect x="0" y="1.5" width="1.1" height="11" fill="#7ba3b5"/><path d="M2.6 0H8.6L12.8 4.2V10.5Q12.8 12.8 10.5 12.8H2.6Z" fill="#7ba3b5"/><path d="M8.4 1.6V4.4H11.2Z" fill="#b4b9b9" opacity=".8"/><rect x="4" y="6" width="6" height="1" fill="#b4b9b9"/><rect x="4" y="8" width="6" height="1" fill="#b4b9b9"/><rect x="4" y="10" width="4" height="1" fill="#b4b9b9"/><circle cx="12.90" cy="12.10" r="3.60" fill="#b4b9b9"/><polygon points="12.90,9.30 13.69,11.21 15.75,11.37 14.18,12.72 14.66,14.73 12.90,13.65 11.14,14.73 11.62,12.72 10.05,11.37 12.11,11.21" fill="#7ba3b5"/></svg>
<svg class="a" style="left:1209.5px;top:78px;" width="24" height="16" viewBox="0 0 24 16" preserveAspectRatio="none"><rect x="0" y="0" width="20" height="12.5" fill="#7ba3b5"/><path d="M0.3 0.6L10 7.5L19.7 0.6M0.3 12L7.3 5.6M19.7 12L12.7 5.6" fill="none" stroke="#b4b9b9" stroke-width="0.9"/><circle cx="19.5" cy="12.5" r="3.8" fill="#b4b9b9"/><polygon points="19.60,9.50 20.47,11.60 22.74,11.78 21.01,13.26 21.54,15.47 19.60,14.29 17.66,15.47 18.19,13.26 16.46,11.78 18.73,11.60" fill="#7ba3b5"/></svg>
<div class="t" style="left:26.0px;width:40px;text-align:right;top:99.03px;font-size:10.6px;color:#303030;font-weight:normal;;-webkit-text-stroke:0.05px currentColor">93</div>
<div class="t" style="left:71.4px;top:99.03px;font-size:10.6px;color:#303030;font-weight:normal;;-webkit-text-stroke:0.05px currentColor">Default</div>
<div class="t" style="left:116.4px;top:99.03px;font-size:10.6px;color:#303030;font-weight:normal;;-webkit-text-stroke:0.05px currentColor">Default</div>
<div class="t" style="left:223.4px;top:99.03px;font-size:10.6px;color:#303030;font-weight:normal;;-webkit-text-stroke:0.05px currentColor"></div>
<div class="t" style="left:310.0px;top:99.03px;font-size:10.6px;color:#303030;font-weight:normal;;-webkit-text-stroke:0.05px currentColor"></div>
<div class="t" style="left:422.4px;top:99.03px;font-size:10.6px;color:#303030;font-weight:normal;;-webkit-text-stroke:0.05px currentColor"></div>
<div class="t" style="left:452.8px;top:99.03px;font-size:10.6px;color:#303030;font-weight:normal;;-webkit-text-stroke:0.05px currentColor">Active</div>
<div class="t" style="left:564.9px;top:99.03px;font-size:10.6px;color:#303030;font-weight:normal;;-webkit-text-stroke:0.05px currentColor">Paid</div>
<div class="t" style="left:683.9px;top:99.03px;font-size:10.6px;color:#303030;font-weight:normal;;-webkit-text-stroke:0.05px currentColor">ReadyToBeShipped</div>
<div class="t" style="left:796.4px;top:99.03px;font-size:10.6px;color:#303030;font-weight:normal;;-webkit-text-stroke:0.05px currentColor">Default</div>
<svg class="a" style="left:955.5px;top:96.2px;" width="14" height="14" viewBox="0 0 14 14" preserveAspectRatio="none"><rect x="0.5" y="0.5" width="13" height="13" rx="1.5" fill="#fff" stroke="#efefef"/><path d="M2.4 6.1L6 9.2L12.3 2.9" fill="none" stroke="#1c84c6" stroke-width="1.7"/></svg>
<svg class="a" style="left:1112px;top:96.5px;" width="16" height="13.5" viewBox="0 0 16 13.5" preserveAspectRatio="none"><path d="M4.5 2.5Q4.5 0 6.5 0H9.5Q11.5 0 11.5 2.5Z" fill="#1b6a8d"/><rect x="0" y="2" width="16" height="11" rx="2.5" fill="#1b6a8d"/><rect x="4.5" y="4" width="7" height="7" fill="#9fc2d2"/><rect x="6" y="5.5" width="4" height="4" fill="#1b6a8d"/><path d="M1.8 0.6L13.8 13.2M13.8 0.6L1.8 13.2" stroke="#ea1010" stroke-width="1.9"/></svg>
<svg class="a" style="left:1134.7px;top:97px;" width="16" height="14" viewBox="0 0 16 14" preserveAspectRatio="none"><path d="M14.2 2A6.3 6.3 0 1 0 14.2 11" fill="none" stroke="#1b6a8d" stroke-width="1.8"/><rect x="0.3" y="4.3" width="11" height="1.4" fill="#1b6a8d"/><rect x="0.3" y="7.3" width="11" height="1.4" fill="#1b6a8d"/></svg>
<svg class="a" style="left:1158.2px;top:96px;" width="16" height="15" viewBox="0 0 16 15" preserveAspectRatio="none"><path d="M8 0L15.5 2.6L8 5.2L0.5 2.6Z" fill="#1b6a8d"/><path d="M0 3.9L7.2 6.6V15L0 12.3Z" fill="#1b6a8d"/><path d="M16 3.9L8.8 6.6V15L16 12.3Z" fill="#1b6a8d"/></svg>
<svg class="a" style="left:1185px;top:97px;" width="16" height="15" viewBox="0 0 16 15" preserveAspectRatio="none"><rect x="0" y="1.5" width="1.1" height="11" fill="#9fc2d2"/><path d="M2.6 0H8.6L12.8 4.2V10.5Q12.8 12.8 10.5 12.8H2.6Z" fill="#9fc2d2"/><path d="M8.4 1.6V4.4H11.2Z" fill="#fff" opacity=".8"/><rect x="4" y="6" width="6" height="1" fill="#fff"/><rect x="4" y="8" width="6" height="1" fill="#fff"/><rect x="4" y="10" width="4" height="1" fill="#fff"/><circle cx="12.90" cy="12.10" r="3.60" fill="#fff"/><polygon points="12.90,9.30 13.69,11.21 15.75,11.37 14.18,12.72 14.66,14.73 12.90,13.65 11.14,14.73 11.62,12.72 10.05,11.37 12.11,11.21" fill="#9fc2d2"/></svg>
<svg class="a" style="left:1209.5px;top:97px;" width="24" height="16" viewBox="0 0 24 16" preserveAspectRatio="none"><rect x="0" y="0" width="20" height="12.5" fill="#9fc2d2"/><path d="M0.3 0.6L10 7.5L19.7 0.6M0.3 12L7.3 5.6M19.7 12L12.7 5.6" fill="none" stroke="#fff" stroke-width="0.9"/><circle cx="19.5" cy="12.5" r="3.8" fill="#fff"/><polygon points="19.60,9.50 20.47,11.60 22.74,11.78 21.01,13.26 21.54,15.47 19.60,14.29 17.66,15.47 18.19,13.26 16.46,11.78 18.73,11.60" fill="#9fc2d2"/></svg>
<div class="t" style="left:26.0px;width:40px;text-align:right;top:118.03px;font-size:10.6px;color:#303030;font-weight:normal;;-webkit-text-stroke:0.05px currentColor">92</div>
<div class="t" style="left:71.4px;top:118.03px;font-size:10.6px;color:#303030;font-weight:normal;;-webkit-text-stroke:0.05px currentColor">Проф...</div>
<div class="t" style="left:116.4px;top:118.03px;font-size:10.6px;color:#303030;font-weight:normal;;-webkit-text-stroke:0.05px currentColor">Тест 2</div>
<div class="t" style="left:223.4px;top:118.03px;font-size:10.6px;color:#303030;font-weight:normal;;-webkit-text-stroke:0.05px currentColor">TD-1-X</div>
<div class="t" style="left:310.0px;top:118.03px;font-size:10.6px;color:#303030;font-weight:normal;;-webkit-text-stroke:0.05px currentColor"></div>
<div class="t" style="left:422.4px;top:118.03px;font-size:10.6px;color:#303030;font-weight:normal;;-webkit-text-stroke:0.05px currentColor">I-1-X</div>
<div class="t" style="left:452.8px;top:118.03px;font-size:10.6px;color:#303030;font-weight:normal;;-webkit-text-stroke:0.05px currentColor">Active</div>
<div class="t" style="left:564.9px;top:118.03px;font-size:10.6px;color:#303030;font-weight:normal;;-webkit-text-stroke:0.05px currentColor">Paid</div>
<div class="t" style="left:683.9px;top:118.03px;font-size:10.6px;color:#303030;font-weight:normal;;-webkit-text-stroke:0.05px currentColor">ReadyToBeShipped</div>
<div class="t" style="left:796.4px;top:118.03px;font-size:10.6px;color:#303030;font-weight:normal;;-webkit-text-stroke:0.05px currentColor">Тест 5</div>
<svg class="a" style="left:955.5px;top:115.2px;" width="14" height="14" viewBox="0 0 14 14" preserveAspectRatio="none"><rect x="0.5" y="0.5" width="13" height="13" rx="1.5" fill="#fff" stroke="#efefef"/><path d="M2.4 6.1L6 9.2L12.3 2.9" fill="none" stroke="#1c84c6" stroke-width="1.7"/></svg>
<svg class="a" style="left:1112px;top:115.5px;" width="16" height="13.5" viewBox="0 0 16 13.5" preserveAspectRatio="none"><path d="M4.5 2.5Q4.5 0 6.5 0H9.5Q11.5 0 11.5 2.5Z" fill="#1b6a8d"/><rect x="0" y="2" width="16" height="11" rx="2.5" fill="#1b6a8d"/><rect x="4.5" y="4" width="7" height="7" fill="#9fc2d2"/><rect x="6" y="5.5" width="4" height="4" fill="#1b6a8d"/><path d="M1.8 0.6L13.8 13.2M13.8 0.6L1.8 13.2" stroke="#ea1010" stroke-width="1.9"/></svg>
<svg class="a" style="left:1134.7px;top:116px;" width="16" height="14" viewBox="0 0 16 14" preserveAspectRatio="none"><path d="M14.2 2A6.3 6.3 0 1 0 14.2 11" fill="none" stroke="#1b6a8d" stroke-width="1.8"/><rect x="0.3" y="4.3" width="11" height="1.4" fill="#1b6a8d"/><rect x="0.3" y="7.3" width="11" height="1.4" fill="#1b6a8d"/></svg>
<svg class="a" style="left:1158.2px;top:115px;" width="16" height="15" viewBox="0 0 16 15" preserveAspectRatio="none"><path d="M8 0L15.5 2.6L8 5.2L0.5 2.6Z" fill="#1b6a8d"/><path d="M0 3.9L7.2 6.6V15L0 12.3Z" fill="#1b6a8d"/><path d="M16 3.9L8.8 6.6V15L16 12.3Z" fill="#1b6a8d"/></svg>
<svg class="a" style="left:1185px;top:116px;" width="16" height="15" viewBox="0 0 16 15" preserveAspectRatio="none"><rect x="0" y="1.5" width="1.1" height="11" fill="#9fc2d2"/><path d="M2.6 0H8.6L12.8 4.2V10.5Q12.8 12.8 10.5 12.8H2.6Z" fill="#9fc2d2"/><path d="M8.4 1.6V4.4H11.2Z" fill="#fff" opacity=".8"/><rect x="4" y="6" width="6" height="1" fill="#fff"/><rect x="4" y="8" width="6" height="1" fill="#fff"/><rect x="4" y="10" width="4" height="1" fill="#fff"/><circle cx="12.90" cy="12.10" r="3.60" fill="#fff"/><polygon points="12.90,9.30 13.69,11.21 15.75,11.37 14.18,12.72 14.66,14.73 12.90,13.65 11.14,14.73 11.62,12.72 10.05,11.37 12.11,11.21" fill="#9fc2d2"/></svg>
<svg class="a" style="left:1209.5px;top:116px;" width="24" height="16" viewBox="0 0 24 16" preserveAspectRatio="none"><rect x="0" y="0" width="20" height="12.5" fill="#9fc2d2"/><path d="M0.3 0.6L10 7.5L19.7 0.6M0.3 12L7.3 5.6M19.7 12L12.7 5.6" fill="none" stroke="#fff" stroke-width="0.9"/><circle cx="19.5" cy="12.5" r="3.8" fill="#fff"/><polygon points="19.60,9.50 20.47,11.60 22.74,11.78 21.01,13.26 21.54,15.47 19.60,14.29 17.66,15.47 18.19,13.26 16.46,11.78 18.73,11.60" fill="#9fc2d2"/></svg>
<div class="t" style="left:26.0px;width:40px;text-align:right;top:137.03px;font-size:10.6px;color:#303030;font-weight:normal;;-webkit-text-stroke:0.05px currentColor">91</div>
<div class="t" style="left:71.4px;top:137.03px;font-size:10.6px;color:#303030;font-weight:normal;;-webkit-text-stroke:0.05px currentColor">Тест 3</div>
<div class="t" style="left:116.4px;top:137.03px;font-size:10.6px;color:#303030;font-weight:normal;;-webkit-text-stroke:0.05px currentColor">Тест 3</div>
<div class="t" style="left:223.4px;top:137.03px;font-size:10.6px;color:#303030;font-weight:normal;;-webkit-text-stroke:0.05px currentColor">TTN-2</div>
<div class="t" style="left:310.0px;top:137.03px;font-size:10.6px;color:#303030;font-weight:normal;;-webkit-text-stroke:0.05px currentColor"></div>
<div class="t" style="left:422.4px;top:137.03px;font-size:10.6px;color:#303030;font-weight:normal;;-webkit-text-stroke:0.05px currentColor"></div>
<div class="t" style="left:452.8px;top:137.03px;font-size:10.6px;color:#303030;font-weight:normal;;-webkit-text-stroke:0.05px currentColor">Active</div>
<div class="t" style="left:564.9px;top:137.03px;font-size:10.6px;color:#303030;font-weight:normal;;-webkit-text-stroke:0.05px currentColor">Paid</div>
<div class="t" style="left:683.9px;top:137.03px;font-size:10.6px;color:#303030;font-weight:normal;;-webkit-text-stroke:0.05px currentColor">ReadyToBeShipped</div>
<div class="t" style="left:796.4px;top:137.03px;font-size:10.6px;color:#303030;font-weight:normal;;-webkit-text-stroke:0.05px currentColor">Тест 3</div>
<svg class="a" style="left:955.5px;top:134.2px;" width="14" height="14" viewBox="0 0 14 14" preserveAspectRatio="none"><rect x="0.5" y="0.5" width="13" height="13" rx="1.5" fill="#fff" stroke="#efefef"/><path d="M2.4 6.1L6 9.2L12.3 2.9" fill="none" stroke="#1c84c6" stroke-width="1.7"/></svg>
<svg class="a" style="left:1112px;top:134.5px;" width="16" height="13.5" viewBox="0 0 16 13.5" preserveAspectRatio="none"><path d="M4.5 2.5Q4.5 0 6.5 0H9.5Q11.5 0 11.5 2.5Z" fill="#1b6a8d"/><rect x="0" y="2" width="16" height="11" rx="2.5" fill="#1b6a8d"/><rect x="4.5" y="4" width="7" height="7" fill="#9fc2d2"/><rect x="6" y="5.5" width="4" height="4" fill="#1b6a8d"/><path d="M1.8 0.6L13.8 13.2M13.8 0.6L1.8 13.2" stroke="#ea1010" stroke-width="1.9"/></svg>
<svg class="a" style="left:1134.7px;top:135px;" width="16" height="14" viewBox="0 0 16 14" preserveAspectRatio="none"><path d="M14.2 2A6.3 6.3 0 1 0 14.2 11" fill="none" stroke="#1b6a8d" stroke-width="1.8"/><rect x="0.3" y="4.3" width="11" height="1.4" fill="#1b6a8d"/><rect x="0.3" y="7.3" width="11" height="1.4" fill="#1b6a8d"/></svg>
<svg class="a" style="left:1158.2px;top:134px;" width="16" height="15" viewBox="0 0 16 15" preserveAspectRatio="none"><path d="M8 0L15.5 2.6L8 5.2L0.5 2.6Z" fill="#1b6a8d"/><path d="M0 3.9L7.2 6.6V15L0 12.3Z" fill="#1b6a8d"/><path d="M16 3.9L8.8 6.6V15L16 12.3Z" fill="#1b6a8d"/></svg>
<svg class="a" style="left:1185px;top:135px;" width="16" height="15" viewBox="0 0 16 15" preserveAspectRatio="none"><rect x="0" y="1.5" width="1.1" height="11" fill="#9fc2d2"/><path d="M2.6 0H8.6L12.8 4.2V10.5Q12.8 12.8 10.5 12.8H2.6Z" fill="#9fc2d2"/><path d="M8.4 1.6V4.4H11.2Z" fill="#fff" opacity=".8"/><rect x="4" y="6" width="6" height="1" fill="#fff"/><rect x="4" y="8" width="6" height="1" fill="#fff"/><rect x="4" y="10" width="4" height="1" fill="#fff"/><circle cx="12.90" cy="12.10" r="3.60" fill="#fff"/><polygon points="12.90,9.30 13.69,11.21 15.75,11.37 14.18,12.72 14.66,14.73 12.90,13.65 11.14,14.73 11.62,12.72 10.05,11.37 12.11,11.21" fill="#9fc2d2"/></svg>
<svg class="a" style="left:1209.5px;top:135px;" width="24" height="16" viewBox="0 0 24 16" preserveAspectRatio="none"><rect x="0" y="0" width="20" height="12.5" fill="#9fc2d2"/><path d="M0.3 0.6L10 7.5L19.7 0.6M0.3 12L7.3 5.6M19.7 12L12.7 5.6" fill="none" stroke="#fff" stroke-width="0.9"/><circle cx="19.5" cy="12.5" r="3.8" fill="#fff"/><polygon points="19.60,9.50 20.47,11.60 22.74,11.78 21.01,13.26 21.54,15.47 19.60,14.29 17.66,15.47 18.19,13.26 16.46,11.78 18.73,11.60" fill="#9fc2d2"/></svg>
<div class="t" style="left:26.0px;width:40px;text-align:right;top:156.03px;font-size:10.6px;color:#303030;font-weight:normal;;-webkit-text-stroke:0.05px currentColor">90</div>
<div class="t" style="left:71.4px;top:156.03px;font-size:10.6px;color:#303030;font-weight:normal;;-webkit-text-stroke:0.05px currentColor">Default</div>
<div class="t" style="left:116.4px;top:156.03px;font-size:10.6px;color:#303030;font-weight:normal;;-webkit-text-stroke:0.05px currentColor">Default</div>
<div class="t" style="left:223.4px;top:156.03px;font-size:10.6px;color:#303030;font-weight:normal;;-webkit-text-stroke:0.05px currentColor"></div>
<div class="t" style="left:310.0px;top:156.03px;font-size:10.6px;color:#303030;font-weight:normal;;-webkit-text-stroke:0.05px currentColor"></div>
<div class="t" style="left:422.4px;top:156.03px;font-size:10.6px;color:#303030;font-weight:normal;;-webkit-text-stroke:0.05px currentColor">3</div>
<div class="t" style="left:452.8px;top:156.03px;font-size:10.6px;color:#303030;font-weight:normal;;-webkit-text-stroke:0.05px currentColor">Active</div>
<div class="t" style="left:564.9px;top:156.03px;font-size:10.6px;color:#303030;font-weight:normal;;-webkit-text-stroke:0.05px currentColor">Paid</div>
<div class="t" style="left:683.9px;top:156.03px;font-size:10.6px;color:#303030;font-weight:normal;;-webkit-text-stroke:0.05px currentColor">ReadyToBeShipped</div>
<div class="t" style="left:796.4px;top:156.03px;font-size:10.6px;color:#303030;font-weight:normal;;-webkit-text-stroke:0.05px currentColor">Default</div>
<svg class="a" style="left:955.5px;top:153.2px;" width="14" height="14" viewBox="0 0 14 14" preserveAspectRatio="none"><rect x="0.5" y="0.5" width="13" height="13" rx="1.5" fill="#fff" stroke="#efefef"/><path d="M2.4 6.1L6 9.2L12.3 2.9" fill="none" stroke="#1c84c6" stroke-width="1.7"/></svg>
<svg class="a" style="left:1112px;top:153.5px;" width="16" height="13.5" viewBox="0 0 16 13.5" preserveAspectRatio="none"><path d="M4.5 2.5Q4.5 0 6.5 0H9.5Q11.5 0 11.5 2.5Z" fill="#1b6a8d"/><rect x="0" y="2" width="16" height="11" rx="2.5" fill="#1b6a8d"/><rect x="4.5" y="4" width="7" height="7" fill="#9fc2d2"/><rect x="6" y="5.5" width="4" height="4" fill="#1b6a8d"/><path d="M1.8 0.6L13.8 13.2M13.8 0.6L1.8 13.2" stroke="#ea1010" stroke-width="1.9"/></svg>
<svg class="a" style="left:1134.7px;top:154px;" width="16" height="14" viewBox="0 0 16 14" preserveAspectRatio="none"><path d="M14.2 2A6.3 6.3 0 1 0 14.2 11" fill="none" stroke="#1b6a8d" stroke-width="1.8"/><rect x="0.3" y="4.3" width="11" height="1.4" fill="#1b6a8d"/><rect x="0.3" y="7.3" width="11" height="1.4" fill="#1b6a8d"/></svg>
<svg class="a" style="left:1158.2px;top:153px;" width="16" height="15" viewBox="0 0 16 15" preserveAspectRatio="none"><path d="M8 0L15.5 2.6L8 5.2L0.5 2.6Z" fill="#1b6a8d"/><path d="M0 3.9L7.2 6.6V15L0 12.3Z" fill="#1b6a8d"/><path d="M16 3.9L8.8 6.6V15L16 12.3Z" fill="#1b6a8d"/></svg>
<svg class="a" style="left:1185px;top:154px;" width="16" height="15" viewBox="0 0 16 15" preserveAspectRatio="none"><rect x="0" y="1.5" width="1.1" height="11" fill="#9fc2d2"/><path d="M2.6 0H8.6L12.8 4.2V10.5Q12.8 12.8 10.5 12.8H2.6Z" fill="#9fc2d2"/><path d="M8.4 1.6V4.4H11.2Z" fill="#fff" opacity=".8"/><rect x="4" y="6" width="6" height="1" fill="#fff"/><rect x="4" y="8" width="6" height="1" fill="#fff"/><rect x="4" y="10" width="4" height="1" fill="#fff"/><circle cx="12.90" cy="12.10" r="3.60" fill="#fff"/><polygon points="12.90,9.30 13.69,11.21 15.75,11.37 14.18,12.72 14.66,14.73 12.90,13.65 11.14,14.73 11.62,12.72 10.05,11.37 12.11,11.21" fill="#9fc2d2"/></svg>
<svg class="a" style="left:1209.5px;top:154px;" width="24" height="16" viewBox="0 0 24 16" preserveAspectRatio="none"><rect x="0" y="0" width="20" height="12.5" fill="#9fc2d2"/><path d="M0.3 0.6L10 7.5L19.7 0.6M0.3 12L7.3 5.6M19.7 12L12.7 5.6" fill="none" stroke="#fff" stroke-width="0.9"/><circle cx="19.5" cy="12.5" r="3.8" fill="#fff"/><polygon points="19.60,9.50 20.47,11.60 22.74,11.78 21.01,13.26 21.54,15.47 19.60,14.29 17.66,15.47 18.19,13.26 16.46,11.78 18.73,11.60" fill="#9fc2d2"/></svg>
<div class="t" style="left:26.0px;width:40px;text-align:right;top:175.03px;font-size:10.6px;color:#303030;font-weight:normal;;-webkit-text-stroke:0.05px currentColor">89</div>
<div class="t" style="left:71.4px;top:175.03px;font-size:10.6px;color:#303030;font-weight:normal;;-webkit-text-stroke:0.05px currentColor">Default</div>
<div class="t" style="left:116.4px;top:175.03px;font-size:10.6px;color:#303030;font-weight:normal;;-webkit-text-stroke:0.05px currentColor">Default</div>
<div class="t" style="left:223.4px;top:175.03px;font-size:10.6px;color:#303030;font-weight:normal;;-webkit-text-stroke:0.05px currentColor"></div>
<div class="t" style="left:310.0px;top:175.03px;font-size:10.6px;color:#303030;font-weight:normal;;-webkit-text-stroke:0.05px currentColor"></div>
<div class="t" style="left:422.4px;top:175.03px;font-size:10.6px;color:#303030;font-weight:normal;;-webkit-text-stroke:0.05px currentColor"></div>
<div class="t" style="left:452.8px;top:175.03px;font-size:10.6px;color:#303030;font-weight:normal;;-webkit-text-stroke:0.05px currentColor">Active</div>
<div class="t" style="left:564.9px;top:175.03px;font-size:10.6px;color:#303030;font-weight:normal;;-webkit-text-stroke:0.05px currentColor">Paid</div>
<div class="t" style="left:683.9px;top:175.03px;font-size:10.6px;color:#303030;font-weight:normal;;-webkit-text-stroke:0.05px currentColor">ReadyToBeShipped</div>
<div class="t" style="left:796.4px;top:175.03px;font-size:10.6px;color:#303030;font-weight:normal;;-webkit-text-stroke:0.05px currentColor">Default</div>
<svg class="a" style="left:955.5px;top:172.2px;" width="14" height="14" viewBox="0 0 14 14" preserveAspectRatio="none"><rect x="0.5" y="0.5" width="13" height="13" rx="1.5" fill="#fff" stroke="#efefef"/><path d="M2.4 6.1L6 9.2L12.3 2.9" fill="none" stroke="#1c84c6" stroke-width="1.7"/></svg>
<svg class="a" style="left:1112px;top:172.5px;" width="16" height="13.5" viewBox="0 0 16 13.5" preserveAspectRatio="none"><path d="M4.5 2.5Q4.5 0 6.5 0H9.5Q11.5 0 11.5 2.5Z" fill="#1b6a8d"/><rect x="0" y="2" width="16" height="11" rx="2.5" fill="#1b6a8d"/><rect x="4.5" y="4" width="7" height="7" fill="#9fc2d2"/><rect x="6" y="5.5" width="4" height="4" fill="#1b6a8d"/><path d="M1.8 0.6L13.8 13.2M13.8 0.6L1.8 13.2" stroke="#ea1010" stroke-width="1.9"/></svg>
<svg class="a" style="left:1134.7px;top:173px;" width="16" height="14" viewBox="0 0 16 14" preserveAspectRatio="none"><path d="M14.2 2A6.3 6.3 0 1 0 14.2 11" fill="none" stroke="#1b6a8d" stroke-width="1.8"/><rect x="0.3" y="4.3" width="11" height="1.4" fill="#1b6a8d"/><rect x="0.3" y="7.3" width="11" height="1.4" fill="#1b6a8d"/></svg>
<svg class="a" style="left:1158.2px;top:172px;" width="16" height="15" viewBox="0 0 16 15" preserveAspectRatio="none"><path d="M8 0L15.5 2.6L8 5.2L0.5 2.6Z" fill="#1b6a8d"/><path d="M0 3.9L7.2 6.6V15L0 12.3Z" fill="#1b6a8d"/><path d="M16 3.9L8.8 6.6V15L16 12.3Z" fill="#1b6a8d"/></svg>
<svg class="a" style="left:1185px;top:173px;" width="16" height="15" viewBox="0 0 16 15" preserveAspectRatio="none"><rect x="0" y="1.5" width="1.1" height="11" fill="#9fc2d2"/><path d="M2.6 0H8.6L12.8 4.2V10.5Q12.8 12.8 10.5 12.8H2.6Z" fill="#9fc2d2"/><path d="M8.4 1.6V4.4H11.2Z" fill="#fff" opacity=".8"/><rect x="4" y="6" width="6" height="1" fill="#fff"/><rect x="4" y="8" width="6" height="1" fill="#fff"/><rect x="4" y="10" width="4" height="1" fill="#fff"/><circle cx="12.90" cy="12.10" r="3.60" fill="#fff"/><polygon points="12.90,9.30 13.69,11.21 15.75,11.37 14.18,12.72 14.66,14.73 12.90,13.65 11.14,14.73 11.62,12.72 10.05,11.37 12.11,11.21" fill="#9fc2d2"/></svg>
<svg class="a" style="left:1209.5px;top:173px;" width="24" height="16" viewBox="0 0 24 16" preserveAspectRatio="none"><rect x="0" y="0" width="20" height="12.5" fill="#9fc2d2"/><path d="M0.3 0.6L10 7.5L19.7 0.6M0.3 12L7.3 5.6M19.7 12L12.7 5.6" fill="none" stroke="#fff" stroke-width="0.9"/><circle cx="19.5" cy="12.5" r="3.8" fill="#fff"/><polygon points="19.60,9.50 20.47,11.60 22.74,11.78 21.01,13.26 21.54,15.47 19.60,14.29 17.66,15.47 18.19,13.26 16.46,11.78 18.73,11.60" fill="#9fc2d2"/></svg>
<div class="t" style="left:26.0px;width:40px;text-align:right;top:194.03px;font-size:10.6px;color:#303030;font-weight:normal;;-webkit-text-stroke:0.05px currentColor">88</div>
<div class="t" style="left:71.4px;top:194.03px;font-size:10.6px;color:#303030;font-weight:normal;;-webkit-text-stroke:0.05px currentColor">Default</div>
<div class="t" style="left:116.4px;top:194.03px;font-size:10.6px;color:#303030;font-weight:normal;;-webkit-text-stroke:0.05px currentColor">Default</div>
<div class="t" style="left:223.4px;top:194.03px;font-size:10.6px;color:#303030;font-weight:normal;;-webkit-text-stroke:0.05px currentColor"></div>
<div class="t" style="left:310.0px;top:194.03px;font-size:10.6px;color:#303030;font-weight:normal;;-webkit-text-stroke:0.05px currentColor"></div>
<div class="t" style="left:422.4px;top:194.03px;font-size:10.6px;color:#303030;font-weight:normal;;-webkit-text-stroke:0.05px currentColor"></div>
<div class="t" style="left:452.8px;top:194.03px;font-size:10.6px;color:#303030;font-weight:normal;;-webkit-text-stroke:0.05px currentColor">Active</div>
<div class="t" style="left:564.9px;top:194.03px;font-size:10.6px;color:#303030;font-weight:normal;;-webkit-text-stroke:0.05px currentColor">Paid</div>
<div class="t" style="left:683.9px;top:194.03px;font-size:10.6px;color:#303030;font-weight:normal;;-webkit-text-stroke:0.05px currentColor">ReadyToBeShipped</div>
<div class="t" style="left:796.4px;top:194.03px;font-size:10.6px;color:#303030;font-weight:normal;;-webkit-text-stroke:0.05px currentColor">Default</div>
<svg class="a" style="left:955.5px;top:191.2px;" width="14" height="14" viewBox="0 0 14 14" preserveAspectRatio="none"><rect x="0.5" y="0.5" width="13" height="13" rx="1.5" fill="#fff" stroke="#efefef"/><path d="M2.4 6.1L6 9.2L12.3 2.9" fill="none" stroke="#1c84c6" stroke-width="1.7"/></svg>
<svg class="a" style="left:1112px;top:191.5px;" width="16" height="13.5" viewBox="0 0 16 13.5" preserveAspectRatio="none"><path d="M4.5 2.5Q4.5 0 6.5 0H9.5Q11.5 0 11.5 2.5Z" fill="#1b6a8d"/><rect x="0" y="2" width="16" height="11" rx="2.5" fill="#1b6a8d"/><rect x="4.5" y="4" width="7" height="7" fill="#9fc2d2"/><rect x="6" y="5.5" width="4" height="4" fill="#1b6a8d"/><path d="M1.8 0.6L13.8 13.2M13.8 0.6L1.8 13.2" stroke="#ea1010" stroke-width="1.9"/></svg>
<svg class="a" style="left:1134.7px;top:192px;" width="16" height="14" viewBox="0 0 16 14" preserveAspectRatio="none"><path d="M14.2 2A6.3 6.3 0 1 0 14.2 11" fill="none" stroke="#1b6a8d" stroke-width="1.8"/><rect x="0.3" y="4.3" width="11" height="1.4" fill="#1b6a8d"/><rect x="0.3" y="7.3" width="11" height="1.4" fill="#1b6a8d"/></svg>
<svg class="a" style="left:1158.2px;top:191px;" width="16" height="15" viewBox="0 0 16 15" preserveAspectRatio="none"><path d="M8 0L15.5 2.6L8 5.2L0.5 2.6Z" fill="#1b6a8d"/><path d="M0 3.9L7.2 6.6V15L0 12.3Z" fill="#1b6a8d"/><path d="M16 3.9L8.8 6.6V15L16 12.3Z" fill="#1b6a8d"/></svg>
<svg class="a" style="left:1185px;top:192px;" width="16" height="15" viewBox="0 0 16 15" preserveAspectRatio="none"><rect x="0" y="1.5" width="1.1" height="11" fill="#9fc2d2"/><path d="M2.6 0H8.6L12.8 4.2V10.5Q12.8 12.8 10.5 12.8H2.6Z" fill="#9fc2d2"/><path d="M8.4 1.6V4.4H11.2Z" fill="#fff" opacity=".8"/><rect x="4" y="6" width="6" height="1" fill="#fff"/><rect x="4" y="8" width="6" height="1" fill="#fff"/><rect x="4" y="10" width="4" height="1" fill="#fff"/><circle cx="12.90" cy="12.10" r="3.60" fill="#fff"/><polygon points="12.90,9.30 13.69,11.21 15.75,11.37 14.18,12.72 14.66,14.73 12.90,13.65 11.14,14.73 11.62,12.72 10.05,11.37 12.11,11.21" fill="#9fc2d2"/></svg>
<svg class="a" style="left:1209.5px;top:192px;" width="24" height="16" viewBox="0 0 24 16" preserveAspectRatio="none"><rect x="0" y="0" width="20" height="12.5" fill="#9fc2d2"/><path d="M0.3 0.6L10 7.5L19.7 0.6M0.3 12L7.3 5.6M19.7 12L12.7 5.6" fill="none" stroke="#fff" stroke-width="0.9"/><circle cx="19.5" cy="12.5" r="3.8" fill="#fff"/><polygon points="19.60,9.50 20.47,11.60 22.74,11.78 21.01,13.26 21.54,15.47 19.60,14.29 17.66,15.47 18.19,13.26 16.46,11.78 18.73,11.60" fill="#9fc2d2"/></svg>
<div class="t" style="left:26.0px;width:40px;text-align:right;top:213.03px;font-size:10.6px;color:#303030;font-weight:normal;;-webkit-text-stroke:0.05px currentColor">87</div>
<div class="t" style="left:71.4px;top:213.03px;font-size:10.6px;color:#303030;font-weight:normal;;-webkit-text-stroke:0.05px currentColor">Default</div>
<div class="t" style="left:116.4px;top:213.03px;font-size:10.6px;color:#303030;font-weight:normal;;-webkit-text-stroke:0.05px currentColor">Default</div>
<div class="t" style="left:223.4px;top:213.03px;font-size:10.6px;color:#303030;font-weight:normal;;-webkit-text-stroke:0.05px currentColor"></div>
<div class="t" style="left:310.0px;top:213.03px;font-size:10.6px;color:#303030;font-weight:normal;;-webkit-text-stroke:0.05px currentColor"></div>
<div class="t" style="left:422.4px;top:213.03px;font-size:10.6px;color:#303030;font-weight:normal;;-webkit-text-stroke:0.05px currentColor"></div>
<div class="t" style="left:452.8px;top:213.03px;font-size:10.6px;color:#303030;font-weight:normal;;-webkit-text-stroke:0.05px currentColor">Active</div>
<div class="t" style="left:564.9px;top:213.03px;font-size:10.6px;color:#303030;font-weight:normal;;-webkit-text-stroke:0.05px currentColor">Paid</div>
<div class="t" style="left:683.9px;top:213.03px;font-size:10.6px;color:#303030;font-weight:normal;;-webkit-text-stroke:0.05px currentColor">ReadyToBeShipped</div>
<div class="t" style="left:796.4px;top:213.03px;font-size:10.6px;color:#303030;font-weight:normal;;-webkit-text-stroke:0.05px currentColor">Default</div>
<svg class="a" style="left:955.5px;top:210.2px;" width="14" height="14" viewBox="0 0 14 14" preserveAspectRatio="none"><rect x="0.5" y="0.5" width="13" height="13" rx="1.5" fill="#fff" stroke="#efefef"/><path d="M2.4 6.1L6 9.2L12.3 2.9" fill="none" stroke="#1c84c6" stroke-width="1.7"/></svg>
<svg class="a" style="left:1112px;top:210.5px;" width="16" height="13.5" viewBox="0 0 16 13.5" preserveAspectRatio="none"><path d="M4.5 2.5Q4.5 0 6.5 0H9.5Q11.5 0 11.5 2.5Z" fill="#1b6a8d"/><rect x="0" y="2" width="16" height="11" rx="2.5" fill="#1b6a8d"/><rect x="4.5" y="4" width="7" height="7" fill="#9fc2d2"/><rect x="6" y="5.5" width="4" height="4" fill="#1b6a8d"/><path d="M1.8 0.6L13.8 13.2M13.8 0.6L1.8 13.2" stroke="#ea1010" stroke-width="1.9"/></svg>
<svg class="a" style="left:1134.7px;top:211px;" width="16" height="14" viewBox="0 0 16 14" preserveAspectRatio="none"><path d="M14.2 2A6.3 6.3 0 1 0 14.2 11" fill="none" stroke="#1b6a8d" stroke-width="1.8"/><rect x="0.3" y="4.3" width="11" height="1.4" fill="#1b6a8d"/><rect x="0.3" y="7.3" width="11" height="1.4" fill="#1b6a8d"/></svg>
<svg class="a" style="left:1158.2px;top:210px;" width="16" height="15" viewBox="0 0 16 15" preserveAspectRatio="none"><path d="M8 0L15.5 2.6L8 5.2L0.5 2.6Z" fill="#1b6a8d"/><path d="M0 3.9L7.2 6.6V15L0 12.3Z" fill="#1b6a8d"/><path d="M16 3.9L8.8 6.6V15L16 12.3Z" fill="#1b6a8d"/></svg>
<svg class="a" style="left:1185px;top:211px;" width="16" height="15" viewBox="0 0 16 15" preserveAspectRatio="none"><rect x="0" y="1.5" width="1.1" height="11" fill="#9fc2d2"/><path d="M2.6 0H8.6L12.8 4.2V10.5Q12.8 12.8 10.5 12.8H2.6Z" fill="#9fc2d2"/><path d="M8.4 1.6V4.4H11.2Z" fill="#fff" opacity=".8"/><rect x="4" y="6" width="6" height="1" fill="#fff"/><rect x="4" y="8" width="6" height="1" fill="#fff"/><rect x="4" y="10" width="4" height="1" fill="#fff"/><circle cx="12.90" cy="12.10" r="3.60" fill="#fff"/><polygon points="12.90,9.30 13.69,11.21 15.75,11.37 14.18,12.72 14.66,14.73 12.90,13.65 11.14,14.73 11.62,12.72 10.05,11.37 12.11,11.21" fill="#9fc2d2"/></svg>
<svg class="a" style="left:1209.5px;top:211px;" width="24" height="16" viewBox="0 0 24 16" preserveAspectRatio="none"><rect x="0" y="0" width="20" height="12.5" fill="#9fc2d2"/><path d="M0.3 0.6L10 7.5L19.7 0.6M0.3 12L7.3 5.6M19.7 12L12.7 5.6" fill="none" stroke="#fff" stroke-width="0.9"/><circle cx="19.5" cy="12.5" r="3.8" fill="#fff"/><polygon points="19.60,9.50 20.47,11.60 22.74,11.78 21.01,13.26 21.54,15.47 19.60,14.29 17.66,15.47 18.19,13.26 16.46,11.78 18.73,11.60" fill="#9fc2d2"/></svg>
</div>
<svg class="a" style="left:85.2px;top:467.3px;" width="13.5" height="13.5" viewBox="0 0 13.5 13.5" preserveAspectRatio="none"><rect x="0" y="0" width="13.5" height="13.5" fill="#fff"/><path d="M2.5 6.5L5.5 9.3L11 3.8" fill="none" stroke="#1c84c6" stroke-width="1.5"/></svg>
<div class="t" style="left:85.0px;top:626.89px;font-size:11px;color:#444;font-weight:normal;">50</div>
<div class="t" style="left:111.3px;top:626.89px;font-size:11px;color:#444;font-weight:normal;">100</div>
<div class="a" style="left:138px;top:623px;width:29px;height:20px;background:#d5d5d5;border-radius:3px"></div>
<div class="t" style="left:143.9px;top:626.89px;font-size:11px;color:#333;font-weight:normal;">200</div>
<div class="t" style="left:1035.4px;width:250px;text-align:right;top:626.69px;font-size:11px;color:#777;font-weight:normal;letter-spacing:-0.1px">Страница 1 из 1 (Всего элементов: 75)</div>
<div class="a" style="left:1298px;top:623px;width:17px;height:20px;background:#d5d5d5;border-radius:3px"></div>
<div class="t" style="left:1296.6px;width:20px;text-align:center;top:626.89px;font-size:11px;color:#333;font-weight:normal;">1</div>
<svg class="a" style="left:0;top:0" width="1338" height="637" viewBox="0 0 1338 637"><rect x="71" y="49.2" width="72.9" height="30.1" fill="none" stroke="#ff2a00" stroke-width="3.2"/><rect x="73.5" y="81" width="310.6" height="167.3" fill="none" stroke="#ff2a00" stroke-width="3.2"/><rect x="75" y="463.4" width="1252.8" height="23.2" fill="none" stroke="#ff2a00" stroke-width="3.2"/><path d="M224.8 252.8L243.4 285.4L230.6 274.8L223.5 457.5Q221.9 460.5 220.3 457.5L217.9 274.8L205.4 285.2Z" fill="#0f45ff" stroke="#fff" stroke-width="7" stroke-linejoin="round" paint-order="stroke"/><path d="M326.80 131.00 L334.00 140.70 L329.40 137.39 L330.00 154.61 L328.00 154.79 L325.42 137.76 L321.60 141.50Z" fill="#0f45ff" stroke="#fff" stroke-width="2.2" stroke-linejoin="round" paint-order="stroke"/><path d="M351.00 132.10 L355.70 143.40 L351.83 138.95 L347.88 155.67 L345.92 155.33 L347.89 138.26 L343.30 141.00Z" fill="#0f45ff" stroke="#fff" stroke-width="2.2" stroke-linejoin="round" paint-order="stroke"/><path d="M372.10 134.30 L375.40 145.60 L372.23 141.20 L366.76 156.87 L364.84 156.33 L368.38 140.11 L363.40 142.60Z" fill="#0f45ff" stroke="#fff" stroke-width="2.2" stroke-linejoin="round" paint-order="stroke"/><circle cx="293" cy="97" r="18.1" fill="#f8f800"/><text x="292.5" y="104.3" font-family="Liberation Sans" font-weight="bold" font-size="18.5" text-anchor="middle" fill="#000">1</text><circle cx="325.8" cy="117.9" r="9.2" fill="#f8f800"/><text x="325.8" y="121.5" font-family="Liberation Sans" font-weight="bold" font-size="10" text-anchor="middle" fill="#000">2</text><circle cx="350" cy="118.8" r="9.2" fill="#f8f800"/><text x="350" y="122.39999999999999" font-family="Liberation Sans" font-weight="bold" font-size="10" text-anchor="middle" fill="#000">3</text><circle cx="371" cy="120" r="9.2" fill="#f8f800"/><text x="371" y="123.6" font-family="Liberation Sans" font-weight="bold" font-size="10" text-anchor="middle" fill="#000">4</text></svg>
</div></body></html>
